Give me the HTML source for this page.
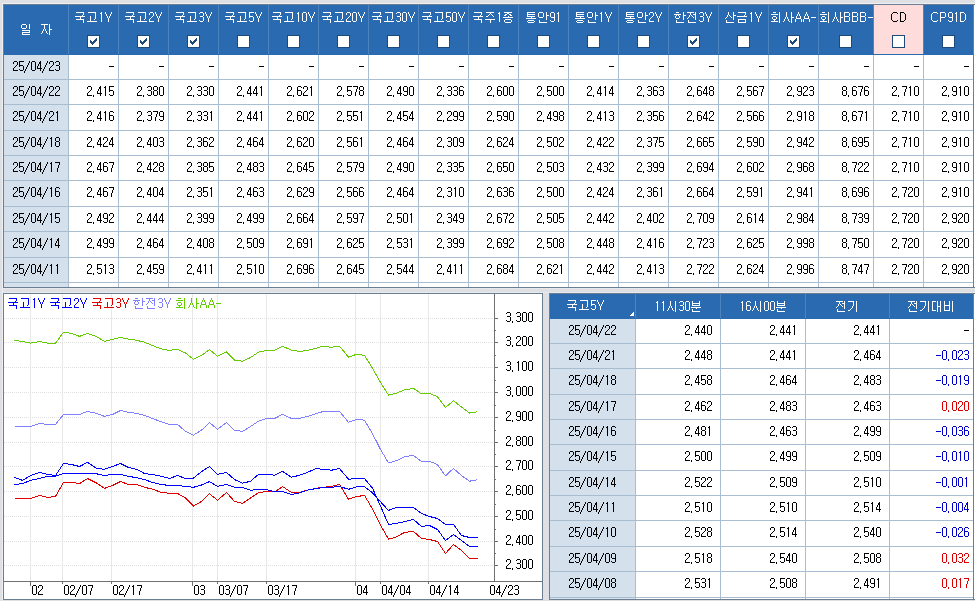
<!DOCTYPE html><html><head><meta charset="utf-8"><style>
html,body{margin:0;padding:0;} body{width:975px;height:601px;overflow:hidden;position:relative;background:#dfe0e4;font-family:'Liberation Sans',sans-serif;}
div{position:absolute;box-sizing:border-box;}
.t{white-space:nowrap;}
</style></head><body>
<svg width="0" height="0" style="position:absolute;left:0;top:0"><defs><path id="g0" d="M1 0h3v1h-3zM0 1h1v1h-1zM4 1h1v1h-1zM0 2h1v1h-1zM4 2h1v1h-1zM0 3h1v1h-1zM4 3h1v1h-1zM0 4h1v1h-1zM4 4h1v1h-1zM0 5h1v1h-1zM4 5h1v1h-1zM0 6h1v1h-1zM4 6h1v1h-1zM0 7h1v1h-1zM4 7h1v1h-1zM0 8h1v1h-1zM4 8h1v1h-1zM1 9h3v1h-3z"/><path id="g1" d="M2 0h1v1h-1zM1 1h2v1h-2zM2 2h1v1h-1zM2 3h1v1h-1zM2 4h1v1h-1zM2 5h1v1h-1zM2 6h1v1h-1zM2 7h1v1h-1zM2 8h1v1h-1zM2 9h1v1h-1z"/><path id="g2" d="M1 0h3v1h-3zM0 1h1v1h-1zM4 1h1v1h-1zM0 2h1v1h-1zM4 2h1v1h-1zM4 3h1v1h-1zM3 4h1v1h-1zM2 5h1v1h-1zM1 6h1v1h-1zM0 7h1v1h-1zM0 8h1v1h-1zM0 9h5v1h-5z"/><path id="g3" d="M1 0h3v1h-3zM0 1h1v1h-1zM4 1h1v1h-1zM4 2h1v1h-1zM4 3h1v1h-1zM1 4h3v1h-3zM4 5h1v1h-1zM4 6h1v1h-1zM4 7h1v1h-1zM0 8h1v1h-1zM4 8h1v1h-1zM1 9h3v1h-3z"/><path id="g4" d="M3 0h1v1h-1zM2 1h2v1h-2zM2 2h2v1h-2zM1 3h1v1h-1zM3 3h1v1h-1zM1 4h1v1h-1zM3 4h1v1h-1zM0 5h1v1h-1zM3 5h1v1h-1zM0 6h1v1h-1zM3 6h1v1h-1zM0 7h5v1h-5zM3 8h1v1h-1zM3 9h1v1h-1z"/><path id="g5" d="M0 0h5v1h-5zM0 1h1v1h-1zM0 2h1v1h-1zM0 3h1v1h-1zM0 4h4v1h-4zM0 5h1v1h-1zM4 5h1v1h-1zM4 6h1v1h-1zM4 7h1v1h-1zM0 8h1v1h-1zM4 8h1v1h-1zM1 9h3v1h-3z"/><path id="g6" d="M1 0h3v1h-3zM0 1h1v1h-1zM4 1h1v1h-1zM0 2h1v1h-1zM0 3h1v1h-1zM0 4h4v1h-4zM0 5h1v1h-1zM4 5h1v1h-1zM0 6h1v1h-1zM4 6h1v1h-1zM0 7h1v1h-1zM4 7h1v1h-1zM0 8h1v1h-1zM4 8h1v1h-1zM1 9h3v1h-3z"/><path id="g7" d="M0 0h5v1h-5zM4 1h1v1h-1zM4 2h1v1h-1zM3 3h1v1h-1zM3 4h1v1h-1zM3 5h1v1h-1zM2 6h1v1h-1zM2 7h1v1h-1zM2 8h1v1h-1zM2 9h1v1h-1z"/><path id="g8" d="M1 0h3v1h-3zM0 1h1v1h-1zM4 1h1v1h-1zM0 2h1v1h-1zM4 2h1v1h-1zM0 3h1v1h-1zM4 3h1v1h-1zM1 4h3v1h-3zM0 5h1v1h-1zM4 5h1v1h-1zM0 6h1v1h-1zM4 6h1v1h-1zM0 7h1v1h-1zM4 7h1v1h-1zM0 8h1v1h-1zM4 8h1v1h-1zM1 9h3v1h-3z"/><path id="g9" d="M1 0h3v1h-3zM0 1h1v1h-1zM4 1h1v1h-1zM0 2h1v1h-1zM4 2h1v1h-1zM0 3h1v1h-1zM4 3h1v1h-1zM0 4h1v1h-1zM4 4h1v1h-1zM1 5h4v1h-4zM4 6h1v1h-1zM4 7h1v1h-1zM0 8h1v1h-1zM4 8h1v1h-1zM1 9h3v1h-3z"/><path id="gcm" d="M0 9h1v2h-1z"/><path id="gsl" d="M4 0h1v2h-1zM3 2h1v2h-1zM2 4h1v2h-1zM1 6h1v2h-1zM0 8h1v2h-1zM-1 10h1v2h-1z"/><path id="gmn" d="M0 5h5v1h-5z"/></defs></svg>
<svg width="0" height="0" style="position:absolute;left:0;top:0"><defs><path id="h0" d="M1 0h8v1h-8zM8 1h1v1h-1zM8 2h1v1h-1zM7 3h1v1h-1zM0 4h10v1h-10zM5 5h1v1h-1zM5 6h1v1h-1zM1 7h8v1h-8zM8 8h1v1h-1zM8 9h1v1h-1zM8 10h1v1h-1z"/><path id="h1" d="M1 0h8v1h-8zM8 1h1v1h-1zM8 2h1v1h-1zM8 3h1v1h-1zM3 4h1v1h-1zM8 4h1v1h-1zM3 5h1v1h-1zM8 5h1v1h-1zM3 6h1v1h-1zM8 6h1v1h-1zM3 7h1v1h-1zM7 7h1v1h-1zM3 8h1v1h-1zM0 9h10v1h-10z"/><path id="h2" d="M1 0h8v1h-8zM5 1h1v1h-1zM4 2h1v1h-1zM6 2h1v1h-1zM3 3h1v1h-1zM7 3h1v1h-1zM1 4h2v1h-2zM8 4h1v1h-1zM0 7h10v1h-10zM5 8h1v1h-1zM5 9h1v1h-1zM5 10h1v1h-1z"/><path id="h3" d="M1 0h8v1h-8zM4 1h2v1h-2zM2 2h2v1h-2zM6 2h2v1h-2zM1 3h2v1h-2zM7 3h2v1h-2zM5 4h1v1h-1zM0 5h10v1h-10zM2 7h6v1h-6zM1 8h1v1h-1zM8 8h1v1h-1zM1 9h1v1h-1zM8 9h1v1h-1zM2 10h6v1h-6z"/><path id="h4" d="M1 0h8v1h-8zM1 1h1v1h-1zM1 2h8v1h-8zM1 3h1v1h-1zM1 4h8v1h-8zM5 5h1v1h-1zM0 6h10v1h-10zM2 8h6v1h-6zM1 9h1v1h-1zM8 9h1v1h-1zM2 10h6v1h-6z"/><path id="h5" d="M1 0h4v1h-4zM8 0h1v1h-1zM0 1h1v1h-1zM5 1h1v1h-1zM8 1h1v1h-1zM0 2h1v1h-1zM5 2h1v1h-1zM8 2h1v1h-1zM0 3h1v1h-1zM5 3h1v1h-1zM8 3h3v1h-3zM0 4h1v1h-1zM5 4h1v1h-1zM8 4h1v1h-1zM1 5h4v1h-4zM8 5h1v1h-1zM8 6h1v1h-1zM8 7h1v1h-1zM1 8h1v1h-1zM1 9h1v1h-1zM1 10h8v1h-8z"/><path id="h6" d="M1 0h3v1h-3zM8 0h1v1h-1zM8 1h1v1h-1zM-1 2h7v1h-7zM8 2h1v1h-1zM1 3h1v1h-1zM3 3h1v1h-1zM8 3h3v1h-3zM0 4h1v1h-1zM4 4h1v1h-1zM8 4h1v1h-1zM0 5h1v1h-1zM4 5h1v1h-1zM8 5h1v1h-1zM1 6h3v1h-3zM8 6h1v1h-1zM8 7h1v1h-1zM1 8h1v1h-1zM1 9h1v1h-1zM1 10h8v1h-8z"/><path id="h7" d="M0 0h7v1h-7zM8 0h1v1h-1zM3 1h1v1h-1zM8 1h1v1h-1zM3 2h1v1h-1zM6 2h3v1h-3zM2 3h1v1h-1zM4 3h1v1h-1zM8 3h1v1h-1zM2 4h1v1h-1zM5 4h1v1h-1zM8 4h1v1h-1zM1 5h1v1h-1zM6 5h1v1h-1zM8 5h1v1h-1zM0 6h1v1h-1zM8 6h1v1h-1zM8 7h1v1h-1zM1 8h1v1h-1zM1 9h1v1h-1zM1 10h8v1h-8z"/><path id="h8" d="M3 0h1v1h-1zM8 0h1v1h-1zM3 1h1v1h-1zM8 1h1v1h-1zM3 2h1v1h-1zM8 2h1v1h-1zM2 3h1v1h-1zM4 3h1v1h-1zM8 3h3v1h-3zM2 4h1v1h-1zM5 4h1v1h-1zM8 4h1v1h-1zM1 5h1v1h-1zM6 5h1v1h-1zM8 5h1v1h-1zM0 6h1v1h-1zM8 6h1v1h-1zM8 7h1v1h-1zM1 8h1v1h-1zM1 9h1v1h-1zM1 10h8v1h-8z"/><path id="h9" d="M1 0h8v1h-8zM8 1h1v1h-1zM8 2h1v1h-1zM7 3h1v1h-1zM0 4h10v1h-10zM1 7h8v1h-8zM1 8h1v1h-1zM8 8h1v1h-1zM1 9h1v1h-1zM8 9h1v1h-1zM1 10h8v1h-8z"/><path id="h10" d="M2 0h3v1h-3zM8 0h1v1h-1zM8 1h1v1h-1zM0 2h7v1h-7zM8 2h1v1h-1zM8 3h1v1h-1zM2 4h3v1h-3zM8 4h1v1h-1zM1 5h1v1h-1zM5 5h1v1h-1zM8 5h1v1h-1zM1 6h1v1h-1zM5 6h1v1h-1zM8 6h1v1h-1zM2 7h3v1h-3zM8 7h1v1h-1zM3 8h1v1h-1zM8 8h1v1h-1zM0 9h7v1h-7zM8 9h1v1h-1zM8 10h1v1h-1z"/><path id="h11" d="M3 0h1v1h-1zM8 0h1v1h-1zM3 1h1v1h-1zM8 1h1v1h-1zM3 2h1v1h-1zM8 2h1v1h-1zM3 3h1v1h-1zM8 3h1v1h-1zM3 4h1v1h-1zM8 4h1v1h-1zM2 5h1v1h-1zM4 5h1v1h-1zM8 5h3v1h-3zM2 6h1v1h-1zM4 6h1v1h-1zM8 6h1v1h-1zM1 7h1v1h-1zM5 7h1v1h-1zM8 7h1v1h-1zM1 8h1v1h-1zM5 8h1v1h-1zM8 8h1v1h-1zM0 9h1v1h-1zM6 9h1v1h-1zM8 9h1v1h-1zM8 10h1v1h-1z"/><path id="h12" d="M1 0h4v1h-4zM8 0h1v1h-1zM0 1h1v1h-1zM5 1h1v1h-1zM8 1h1v1h-1zM0 2h1v1h-1zM5 2h1v1h-1zM8 2h1v1h-1zM0 3h1v1h-1zM5 3h1v1h-1zM8 3h1v1h-1zM1 4h4v1h-4zM8 4h1v1h-1zM1 6h8v1h-8zM8 7h1v1h-1zM1 8h8v1h-8zM1 9h1v1h-1zM1 10h8v1h-8z"/><path id="h13" d="M0 0h7v1h-7zM8 0h1v1h-1zM3 1h1v1h-1zM8 1h1v1h-1zM3 2h1v1h-1zM8 2h1v1h-1zM3 3h1v1h-1zM8 3h1v1h-1zM3 4h1v1h-1zM8 4h1v1h-1zM2 5h1v1h-1zM4 5h1v1h-1zM8 5h3v1h-3zM2 6h1v1h-1zM4 6h1v1h-1zM8 6h1v1h-1zM1 7h1v1h-1zM5 7h1v1h-1zM8 7h1v1h-1zM1 8h1v1h-1zM5 8h1v1h-1zM8 8h1v1h-1zM0 9h1v1h-1zM6 9h1v1h-1zM8 9h1v1h-1zM8 10h1v1h-1z"/><path id="h14" d="M3 0h1v1h-1zM8 0h1v1h-1zM3 1h1v1h-1zM8 1h1v1h-1zM3 2h1v1h-1zM8 2h1v1h-1zM3 3h1v1h-1zM8 3h1v1h-1zM3 4h1v1h-1zM8 4h1v1h-1zM2 5h1v1h-1zM4 5h1v1h-1zM8 5h1v1h-1zM2 6h1v1h-1zM4 6h1v1h-1zM8 6h1v1h-1zM1 7h1v1h-1zM5 7h1v1h-1zM8 7h1v1h-1zM1 8h1v1h-1zM5 8h1v1h-1zM8 8h1v1h-1zM0 9h1v1h-1zM6 9h1v1h-1zM8 9h1v1h-1zM8 10h1v1h-1z"/><path id="h15" d="M1 0h1v1h-1zM8 0h1v1h-1zM1 1h1v1h-1zM8 1h1v1h-1zM1 2h8v1h-8zM1 3h1v1h-1zM8 3h1v1h-1zM1 4h8v1h-8zM0 6h10v1h-10zM5 7h1v1h-1zM1 8h1v1h-1zM1 9h1v1h-1zM1 10h8v1h-8z"/><path id="h16" d="M0 0h6v1h-6zM8 0h1v1h-1zM5 1h1v1h-1zM8 1h1v1h-1zM5 2h1v1h-1zM8 2h1v1h-1zM5 3h1v1h-1zM8 3h1v1h-1zM5 4h1v1h-1zM8 4h1v1h-1zM4 5h1v1h-1zM8 5h1v1h-1zM4 6h1v1h-1zM8 6h1v1h-1zM3 7h1v1h-1zM8 7h1v1h-1zM2 8h1v1h-1zM8 8h1v1h-1zM0 9h2v1h-2zM8 9h1v1h-1zM8 10h1v1h-1z"/><path id="h17" d="M0 0h4v1h-4zM5 0h1v1h-1zM8 0h1v1h-1zM0 1h1v1h-1zM5 1h1v1h-1zM8 1h1v1h-1zM0 2h1v1h-1zM5 2h1v1h-1zM8 2h1v1h-1zM0 3h1v1h-1zM5 3h1v1h-1zM8 3h1v1h-1zM0 4h1v1h-1zM5 4h1v1h-1zM8 4h1v1h-1zM0 5h1v1h-1zM5 5h4v1h-4zM0 6h1v1h-1zM5 6h1v1h-1zM8 6h1v1h-1zM0 7h1v1h-1zM5 7h1v1h-1zM8 7h1v1h-1zM0 8h1v1h-1zM5 8h1v1h-1zM8 8h1v1h-1zM0 9h4v1h-4zM5 9h1v1h-1zM8 9h1v1h-1zM5 10h1v1h-1zM8 10h1v1h-1z"/><path id="h18" d="M0 0h1v1h-1zM5 0h1v1h-1zM8 0h1v1h-1zM0 1h1v1h-1zM5 1h1v1h-1zM8 1h1v1h-1zM0 2h1v1h-1zM5 2h1v1h-1zM8 2h1v1h-1zM0 3h1v1h-1zM5 3h1v1h-1zM8 3h1v1h-1zM0 4h6v1h-6zM8 4h1v1h-1zM0 5h1v1h-1zM5 5h1v1h-1zM8 5h1v1h-1zM0 6h1v1h-1zM5 6h1v1h-1zM8 6h1v1h-1zM0 7h1v1h-1zM5 7h1v1h-1zM8 7h1v1h-1zM0 8h1v1h-1zM5 8h1v1h-1zM8 8h1v1h-1zM0 9h6v1h-6zM8 9h1v1h-1zM8 10h1v1h-1z"/><path id="h19" d="M0 0h1v1h-1zM6 0h1v1h-1zM0 1h1v1h-1zM6 1h1v1h-1zM1 2h1v1h-1zM5 2h1v1h-1zM1 3h1v1h-1zM5 3h1v1h-1zM2 4h1v1h-1zM4 4h1v1h-1zM2 5h1v1h-1zM4 5h1v1h-1zM3 6h1v1h-1zM3 7h1v1h-1zM3 8h1v1h-1zM3 9h1v1h-1z"/><path id="h20" d="M3 0h1v1h-1zM3 1h1v1h-1zM2 2h1v1h-1zM4 2h1v1h-1zM2 3h1v1h-1zM4 3h1v1h-1zM1 4h1v1h-1zM5 4h1v1h-1zM1 5h1v1h-1zM5 5h1v1h-1zM1 6h5v1h-5zM0 7h1v1h-1zM6 7h1v1h-1zM0 8h1v1h-1zM6 8h1v1h-1zM0 9h1v1h-1zM6 9h1v1h-1z"/><path id="h21" d="M0 0h5v1h-5zM0 1h1v1h-1zM5 1h1v1h-1zM0 2h1v1h-1zM5 2h1v1h-1zM0 3h1v1h-1zM5 3h1v1h-1zM0 4h5v1h-5zM0 5h1v1h-1zM5 5h1v1h-1zM0 6h1v1h-1zM5 6h1v1h-1zM0 7h1v1h-1zM5 7h1v1h-1zM0 8h1v1h-1zM5 8h1v1h-1zM0 9h5v1h-5z"/><path id="h22" d="M2 0h4v1h-4zM1 1h1v1h-1zM6 1h1v1h-1zM0 2h1v1h-1zM0 3h1v1h-1zM0 4h1v1h-1zM0 5h1v1h-1zM0 6h1v1h-1zM0 7h1v1h-1zM1 8h1v1h-1zM6 8h1v1h-1zM2 9h4v1h-4z"/><path id="h23" d="M0 0h4v1h-4zM0 1h1v1h-1zM4 1h1v1h-1zM0 2h1v1h-1zM5 2h1v1h-1zM0 3h1v1h-1zM5 3h1v1h-1zM0 4h1v1h-1zM5 4h1v1h-1zM0 5h1v1h-1zM5 5h1v1h-1zM0 6h1v1h-1zM5 6h1v1h-1zM0 7h1v1h-1zM5 7h1v1h-1zM0 8h1v1h-1zM4 8h1v1h-1zM0 9h4v1h-4z"/><path id="h24" d="M0 0h5v1h-5zM0 1h1v1h-1zM5 1h1v1h-1zM0 2h1v1h-1zM5 2h1v1h-1zM0 3h1v1h-1zM5 3h1v1h-1zM0 4h1v1h-1zM5 4h1v1h-1zM0 5h5v1h-5zM0 6h1v1h-1zM0 7h1v1h-1zM0 8h1v1h-1zM0 9h1v1h-1z"/></defs></svg>
<div style="left:2px;top:3px;width:973px;height:1px;background:#eeeff2;"></div>
<div style="left:2px;top:3px;width:1px;height:598px;background:#eeeff2;"></div>
<div style="left:2px;top:288px;width:973px;height:1px;background:#e8e9ec;"></div>
<div style="left:2px;top:292px;width:973px;height:1px;background:#e8e9ec;"></div>
<div style="left:3px;top:4px;width:971px;height:284px;background:#6b7e92;"></div>
<div style="left:4px;top:5px;width:969px;height:282px;background:#ffffff;"></div>
<div style="left:974px;top:5px;width:1px;height:282px;background:#ffffff;"></div>
<div style="left:974px;top:4px;width:1px;height:1px;background:#6b7e92;"></div>
<div style="left:974px;top:287px;width:1px;height:1px;background:#6b7e92;"></div>
<div style="left:4px;top:5px;width:969px;height:50px;background:#2a6ab0;"></div>
<div style="left:874px;top:5px;width:49px;height:49px;background:#ffdcdc;"></div>
<div style="left:68px;top:5px;width:1px;height:49px;background:#4d84c0;"></div>
<div style="left:118px;top:5px;width:1px;height:49px;background:#4d84c0;"></div>
<div style="left:168px;top:5px;width:1px;height:49px;background:#4d84c0;"></div>
<div style="left:218px;top:5px;width:1px;height:49px;background:#4d84c0;"></div>
<div style="left:268px;top:5px;width:1px;height:49px;background:#4d84c0;"></div>
<div style="left:318px;top:5px;width:1px;height:49px;background:#4d84c0;"></div>
<div style="left:368px;top:5px;width:1px;height:49px;background:#4d84c0;"></div>
<div style="left:418px;top:5px;width:1px;height:49px;background:#4d84c0;"></div>
<div style="left:468px;top:5px;width:1px;height:49px;background:#4d84c0;"></div>
<div style="left:518px;top:5px;width:1px;height:49px;background:#4d84c0;"></div>
<div style="left:568px;top:5px;width:1px;height:49px;background:#4d84c0;"></div>
<div style="left:618px;top:5px;width:1px;height:49px;background:#4d84c0;"></div>
<div style="left:668px;top:5px;width:1px;height:49px;background:#4d84c0;"></div>
<div style="left:718px;top:5px;width:1px;height:49px;background:#4d84c0;"></div>
<div style="left:768px;top:5px;width:1px;height:49px;background:#4d84c0;"></div>
<div style="left:818px;top:5px;width:1px;height:49px;background:#4d84c0;"></div>
<div style="left:873px;top:5px;width:1px;height:49px;background:#4d84c0;"></div>
<div style="left:923px;top:5px;width:1px;height:49px;background:#4d84c0;"></div>
<div style="left:4px;top:55px;width:64px;height:232px;background:#d4e0eb;"></div>
<div style="left:4px;top:79px;width:969px;height:1px;background:#a9bdd0;"></div>
<div style="left:4px;top:104px;width:969px;height:1px;background:#a9bdd0;"></div>
<div style="left:4px;top:130px;width:969px;height:1px;background:#a9bdd0;"></div>
<div style="left:4px;top:155px;width:969px;height:1px;background:#a9bdd0;"></div>
<div style="left:4px;top:180px;width:969px;height:1px;background:#a9bdd0;"></div>
<div style="left:4px;top:206px;width:969px;height:1px;background:#a9bdd0;"></div>
<div style="left:4px;top:231px;width:969px;height:1px;background:#a9bdd0;"></div>
<div style="left:4px;top:257px;width:969px;height:1px;background:#a9bdd0;"></div>
<div style="left:4px;top:282px;width:969px;height:1px;background:#a9bdd0;"></div>
<div style="left:68px;top:55px;width:1px;height:232px;background:#a9bdd0;"></div>
<div style="left:118px;top:55px;width:1px;height:232px;background:#a9bdd0;"></div>
<div style="left:168px;top:55px;width:1px;height:232px;background:#a9bdd0;"></div>
<div style="left:218px;top:55px;width:1px;height:232px;background:#a9bdd0;"></div>
<div style="left:268px;top:55px;width:1px;height:232px;background:#a9bdd0;"></div>
<div style="left:318px;top:55px;width:1px;height:232px;background:#a9bdd0;"></div>
<div style="left:368px;top:55px;width:1px;height:232px;background:#a9bdd0;"></div>
<div style="left:418px;top:55px;width:1px;height:232px;background:#a9bdd0;"></div>
<div style="left:468px;top:55px;width:1px;height:232px;background:#a9bdd0;"></div>
<div style="left:518px;top:55px;width:1px;height:232px;background:#a9bdd0;"></div>
<div style="left:568px;top:55px;width:1px;height:232px;background:#a9bdd0;"></div>
<div style="left:618px;top:55px;width:1px;height:232px;background:#a9bdd0;"></div>
<div style="left:668px;top:55px;width:1px;height:232px;background:#a9bdd0;"></div>
<div style="left:718px;top:55px;width:1px;height:232px;background:#a9bdd0;"></div>
<div style="left:768px;top:55px;width:1px;height:232px;background:#a9bdd0;"></div>
<div style="left:818px;top:55px;width:1px;height:232px;background:#a9bdd0;"></div>
<div style="left:873px;top:55px;width:1px;height:232px;background:#a9bdd0;"></div>
<div style="left:923px;top:55px;width:1px;height:232px;background:#a9bdd0;"></div>
<div style="left:87px;top:35px;width:13px;height:13px"><svg width="13" height="13" viewBox="0 0 13 13" style="position:absolute;left:0;top:0"><rect x="0.5" y="0.5" width="12" height="12" fill="#fff" stroke="#1d4a7a"/><path shape-rendering="crispEdges" fill="#1d4a7a" d="M3 5h1v3h-1z M4 6h1v3h-1z M5 7h1v3h-1z M6 6h1v3h-1z M7 5h1v3h-1z M8 4h1v3h-1z M9 3h1v3h-1z"/></svg></div>
<div style="left:137px;top:35px;width:13px;height:13px"><svg width="13" height="13" viewBox="0 0 13 13" style="position:absolute;left:0;top:0"><rect x="0.5" y="0.5" width="12" height="12" fill="#fff" stroke="#1d4a7a"/><path shape-rendering="crispEdges" fill="#1d4a7a" d="M3 5h1v3h-1z M4 6h1v3h-1z M5 7h1v3h-1z M6 6h1v3h-1z M7 5h1v3h-1z M8 4h1v3h-1z M9 3h1v3h-1z"/></svg></div>
<div style="left:187px;top:35px;width:13px;height:13px"><svg width="13" height="13" viewBox="0 0 13 13" style="position:absolute;left:0;top:0"><rect x="0.5" y="0.5" width="12" height="12" fill="#fff" stroke="#1d4a7a"/><path shape-rendering="crispEdges" fill="#1d4a7a" d="M3 5h1v3h-1z M4 6h1v3h-1z M5 7h1v3h-1z M6 6h1v3h-1z M7 5h1v3h-1z M8 4h1v3h-1z M9 3h1v3h-1z"/></svg></div>
<div style="left:237px;top:35px;width:13px;height:13px"><svg width="13" height="13" viewBox="0 0 13 13" style="position:absolute;left:0;top:0"><rect x="0.5" y="0.5" width="12" height="12" fill="#fff" stroke="#1d4a7a"/></svg></div>
<div style="left:287px;top:35px;width:13px;height:13px"><svg width="13" height="13" viewBox="0 0 13 13" style="position:absolute;left:0;top:0"><rect x="0.5" y="0.5" width="12" height="12" fill="#fff" stroke="#1d4a7a"/></svg></div>
<div style="left:337px;top:35px;width:13px;height:13px"><svg width="13" height="13" viewBox="0 0 13 13" style="position:absolute;left:0;top:0"><rect x="0.5" y="0.5" width="12" height="12" fill="#fff" stroke="#1d4a7a"/></svg></div>
<div style="left:387px;top:35px;width:13px;height:13px"><svg width="13" height="13" viewBox="0 0 13 13" style="position:absolute;left:0;top:0"><rect x="0.5" y="0.5" width="12" height="12" fill="#fff" stroke="#1d4a7a"/></svg></div>
<div style="left:437px;top:35px;width:13px;height:13px"><svg width="13" height="13" viewBox="0 0 13 13" style="position:absolute;left:0;top:0"><rect x="0.5" y="0.5" width="12" height="12" fill="#fff" stroke="#1d4a7a"/></svg></div>
<div style="left:487px;top:35px;width:13px;height:13px"><svg width="13" height="13" viewBox="0 0 13 13" style="position:absolute;left:0;top:0"><rect x="0.5" y="0.5" width="12" height="12" fill="#fff" stroke="#1d4a7a"/></svg></div>
<div style="left:537px;top:35px;width:13px;height:13px"><svg width="13" height="13" viewBox="0 0 13 13" style="position:absolute;left:0;top:0"><rect x="0.5" y="0.5" width="12" height="12" fill="#fff" stroke="#1d4a7a"/></svg></div>
<div style="left:587px;top:35px;width:13px;height:13px"><svg width="13" height="13" viewBox="0 0 13 13" style="position:absolute;left:0;top:0"><rect x="0.5" y="0.5" width="12" height="12" fill="#fff" stroke="#1d4a7a"/></svg></div>
<div style="left:637px;top:35px;width:13px;height:13px"><svg width="13" height="13" viewBox="0 0 13 13" style="position:absolute;left:0;top:0"><rect x="0.5" y="0.5" width="12" height="12" fill="#fff" stroke="#1d4a7a"/></svg></div>
<div style="left:687px;top:35px;width:13px;height:13px"><svg width="13" height="13" viewBox="0 0 13 13" style="position:absolute;left:0;top:0"><rect x="0.5" y="0.5" width="12" height="12" fill="#fff" stroke="#1d4a7a"/><path shape-rendering="crispEdges" fill="#1d4a7a" d="M3 5h1v3h-1z M4 6h1v3h-1z M5 7h1v3h-1z M6 6h1v3h-1z M7 5h1v3h-1z M8 4h1v3h-1z M9 3h1v3h-1z"/></svg></div>
<div style="left:737px;top:35px;width:13px;height:13px"><svg width="13" height="13" viewBox="0 0 13 13" style="position:absolute;left:0;top:0"><rect x="0.5" y="0.5" width="12" height="12" fill="#fff" stroke="#1d4a7a"/></svg></div>
<div style="left:787px;top:35px;width:13px;height:13px"><svg width="13" height="13" viewBox="0 0 13 13" style="position:absolute;left:0;top:0"><rect x="0.5" y="0.5" width="12" height="12" fill="#fff" stroke="#1d4a7a"/><path shape-rendering="crispEdges" fill="#1d4a7a" d="M3 5h1v3h-1z M4 6h1v3h-1z M5 7h1v3h-1z M6 6h1v3h-1z M7 5h1v3h-1z M8 4h1v3h-1z M9 3h1v3h-1z"/></svg></div>
<div style="left:839px;top:35px;width:13px;height:13px"><svg width="13" height="13" viewBox="0 0 13 13" style="position:absolute;left:0;top:0"><rect x="0.5" y="0.5" width="12" height="12" fill="#fff" stroke="#1d4a7a"/></svg></div>
<div style="left:892px;top:35px;width:13px;height:13px"><svg width="13" height="13" viewBox="0 0 13 13" style="position:absolute;left:0;top:0"><rect x="0.5" y="0.5" width="12" height="12" fill="#fff" stroke="#1d4a7a"/></svg></div>
<div style="left:942px;top:35px;width:13px;height:13px"><svg width="13" height="13" viewBox="0 0 13 13" style="position:absolute;left:0;top:0"><rect x="0.5" y="0.5" width="12" height="12" fill="#fff" stroke="#1d4a7a"/></svg></div>
<div style="left:3px;top:293px;width:540px;height:307px;background:#6b7e92;"></div>
<div style="left:4px;top:294px;width:538px;height:305px;background:#fff;"></div>
<svg width="975" height="601" style="position:absolute;left:0;top:0" shape-rendering="crispEdges">
<rect x="30" y="294" width="1" height="287" fill="#e8e8e8"/>
<rect x="62" y="294" width="1" height="287" fill="#e8e8e8"/>
<rect x="111" y="294" width="1" height="287" fill="#e8e8e8"/>
<rect x="192" y="294" width="1" height="287" fill="#e8e8e8"/>
<rect x="217" y="294" width="1" height="287" fill="#e8e8e8"/>
<rect x="266" y="294" width="1" height="287" fill="#e8e8e8"/>
<rect x="355" y="294" width="1" height="287" fill="#e8e8e8"/>
<rect x="380" y="294" width="1" height="287" fill="#e8e8e8"/>
<rect x="428" y="294" width="1" height="287" fill="#e8e8e8"/>
<line x1="4" y1="318.5" x2="494" y2="318.5" stroke="#e0e0e0" stroke-dasharray="1 1"/>
<line x1="4" y1="342.5" x2="494" y2="342.5" stroke="#e0e0e0" stroke-dasharray="1 1"/>
<line x1="4" y1="367.5" x2="494" y2="367.5" stroke="#e0e0e0" stroke-dasharray="1 1"/>
<line x1="4" y1="392.5" x2="494" y2="392.5" stroke="#e0e0e0" stroke-dasharray="1 1"/>
<line x1="4" y1="417.5" x2="494" y2="417.5" stroke="#e0e0e0" stroke-dasharray="1 1"/>
<line x1="4" y1="442.5" x2="494" y2="442.5" stroke="#e0e0e0" stroke-dasharray="1 1"/>
<line x1="4" y1="466.5" x2="494" y2="466.5" stroke="#e0e0e0" stroke-dasharray="1 1"/>
<line x1="4" y1="491.5" x2="494" y2="491.5" stroke="#e0e0e0" stroke-dasharray="1 1"/>
<line x1="4" y1="516.5" x2="494" y2="516.5" stroke="#e0e0e0" stroke-dasharray="1 1"/>
<line x1="4" y1="541.5" x2="494" y2="541.5" stroke="#e0e0e0" stroke-dasharray="1 1"/>
<line x1="4" y1="565.5" x2="494" y2="565.5" stroke="#e0e0e0" stroke-dasharray="1 1"/>
<rect x="494" y="294" width="1" height="288" fill="#707070"/>
<rect x="4" y="581" width="538" height="1" fill="#707070"/>
<rect x="494" y="318" width="4" height="1" fill="#707070"/>
<rect x="494" y="330" width="2" height="1" fill="#707070"/>
<rect x="494" y="342" width="4" height="1" fill="#707070"/>
<rect x="494" y="355" width="2" height="1" fill="#707070"/>
<rect x="494" y="367" width="4" height="1" fill="#707070"/>
<rect x="494" y="380" width="2" height="1" fill="#707070"/>
<rect x="494" y="392" width="4" height="1" fill="#707070"/>
<rect x="494" y="405" width="2" height="1" fill="#707070"/>
<rect x="494" y="417" width="4" height="1" fill="#707070"/>
<rect x="494" y="430" width="2" height="1" fill="#707070"/>
<rect x="494" y="442" width="4" height="1" fill="#707070"/>
<rect x="494" y="454" width="2" height="1" fill="#707070"/>
<rect x="494" y="466" width="4" height="1" fill="#707070"/>
<rect x="494" y="479" width="2" height="1" fill="#707070"/>
<rect x="494" y="491" width="4" height="1" fill="#707070"/>
<rect x="494" y="504" width="2" height="1" fill="#707070"/>
<rect x="494" y="516" width="4" height="1" fill="#707070"/>
<rect x="494" y="529" width="2" height="1" fill="#707070"/>
<rect x="494" y="541" width="4" height="1" fill="#707070"/>
<rect x="494" y="553" width="2" height="1" fill="#707070"/>
<rect x="494" y="565" width="4" height="1" fill="#707070"/>
<rect x="30" y="582" width="1" height="4" fill="#707070"/>
<rect x="62" y="582" width="1" height="2" fill="#707070"/>
<rect x="111" y="582" width="1" height="2" fill="#707070"/>
<rect x="192" y="582" width="1" height="4" fill="#707070"/>
<rect x="217" y="582" width="1" height="2" fill="#707070"/>
<rect x="266" y="582" width="1" height="2" fill="#707070"/>
<rect x="355" y="582" width="1" height="4" fill="#707070"/>
<rect x="380" y="582" width="1" height="2" fill="#707070"/>
<rect x="428" y="582" width="1" height="2" fill="#707070"/>
</svg>
<svg width="975" height="601" style="position:absolute;left:0;top:0" shape-rendering="crispEdges">
<polyline points="14.5,340.3 22.5,341.5 30.5,343.1 39.5,341.5 47.5,343.1 55.5,343.1 63.5,332.3 71.5,333.3 79.5,336.4 87.5,333.5 96.5,336.6 104.5,341.5 112.5,339.4 120.5,337.5 128.5,339.1 136.5,340.3 144.5,342.2 152.5,345.6 161.5,348.9 169.5,350.4 177.5,349.3 185.5,353.0 193.5,359.4 201.5,355.4 209.5,349.5 217.5,356.3 226.5,351.8 234.5,360.2 242.5,361.2 250.5,357.5 258.5,352.2 266.5,350.4 274.5,350.2 282.5,346.2 291.5,350.2 299.5,351.4 307.5,350.4 315.5,348.3 323.5,346.2 331.5,347.3 339.5,346.1 348.5,357.2 356.5,354.3 364.5,355.4 372.5,368.2 380.5,382.4 388.5,395.1 396.5,393.2 404.5,389.9 413.5,388.4 421.5,393.8 429.5,393.3 437.5,396.8 445.5,407.4 453.5,400.7 461.5,407.1 469.5,413.1 477.5,411.8" fill="none" stroke="#66cc00" stroke-width="1"/>
<polyline points="14.5,426.5 22.5,426.5 30.5,426.5 39.5,423.4 47.5,424.4 55.5,424.4 63.5,414.5 71.5,414.5 79.5,414.5 87.5,411.4 96.5,413.3 104.5,416.4 112.5,414.5 120.5,410.5 128.5,412.3 136.5,413.3 144.5,415.4 152.5,418.5 161.5,421.9 169.5,424.4 177.5,424.4 185.5,431.4 193.5,435.1 201.5,430.2 209.5,422.5 217.5,429.3 226.5,422.5 234.5,430.2 242.5,431.4 250.5,426.5 258.5,421.2 266.5,418.5 274.5,418.5 282.5,414.4 291.5,418.5 299.5,418.5 307.5,416.4 315.5,413.9 323.5,411.4 331.5,411.4 339.5,411.4 348.5,422.3 356.5,419.3 364.5,420.2 372.5,433.7 380.5,449.4 388.5,462.9 396.5,460.6 404.5,456.6 413.5,455.4 421.5,461.5 429.5,461.2 437.5,464.7 445.5,475.8 453.5,468.4 461.5,475.5 469.5,481.2 477.5,479.7" fill="none" stroke="#8080ff" stroke-width="1"/>
<polyline points="14.5,498.4 22.5,498.4 30.5,498.4 39.5,495.4 47.5,497.5 55.5,496.3 63.5,482.4 71.5,482.4 79.5,483.6 87.5,478.5 96.5,483.0 104.5,488.4 112.5,485.5 120.5,481.5 128.5,484.5 136.5,484.5 144.5,487.3 152.5,489.2 161.5,492.4 169.5,493.3 177.5,493.4 185.5,498.0 193.5,506.0 201.5,501.4 209.5,493.7 217.5,500.3 226.5,492.5 234.5,501.4 242.5,503.3 250.5,498.0 258.5,492.6 266.5,491.5 274.5,491.9 282.5,486.6 291.5,492.4 299.5,492.4 307.5,490.1 315.5,488.4 323.5,487.3 331.5,486.4 339.5,484.4 348.5,499.3 356.5,496.6 364.5,495.4 372.5,509.0 380.5,525.0 388.5,539.2 396.5,536.9 404.5,532.4 413.5,531.4 421.5,538.5 429.5,539.5 437.5,541.5 445.5,553.5 453.5,544.5 461.5,550.5 469.5,558.5 477.5,558.5" fill="none" stroke="#e00000" stroke-width="1"/>
<polyline points="14.5,477.3 22.5,480.4 30.5,475.5 39.5,472.4 47.5,474.4 55.5,475.5 63.5,463.5 71.5,464.5 79.5,466.5 87.5,462.4 96.5,468.4 104.5,469.3 112.5,466.5 120.5,463.5 128.5,467.5 136.5,469.3 144.5,473.5 152.5,474.6 161.5,476.4 169.5,478.5 177.5,475.5 185.5,478.5 193.5,478.1 201.5,471.6 209.5,466.5 217.5,474.4 226.5,472.5 234.5,479.5 242.5,483.2 250.5,481.3 258.5,474.4 266.5,474.4 274.5,475.1 282.5,471.4 291.5,477.2 299.5,475.3 307.5,472.4 315.5,468.7 323.5,469.3 331.5,470.2 339.5,468.6 348.5,479.2 356.5,478.5 364.5,478.5 372.5,488.2 380.5,506.0 388.5,524.5 396.5,523.4 404.5,521.6 413.5,519.4 421.5,526.5 429.5,525.5 437.5,529.5 445.5,540.5 453.5,534.5 461.5,540.5 469.5,546.5 477.5,546.5" fill="none" stroke="#0000ff" stroke-width="1"/>
<polyline points="14.5,484.5 22.5,483.6 30.5,480.4 39.5,478.5 47.5,476.4 55.5,476.1 63.5,473.5 71.5,473.5 79.5,473.5 87.5,473.5 96.5,473.8 104.5,475.5 112.5,474.4 120.5,474.4 128.5,476.4 136.5,477.6 144.5,479.5 152.5,482.5 161.5,484.5 169.5,485.5 177.5,485.5 185.5,486.4 193.5,487.3 201.5,485.0 209.5,481.6 217.5,486.4 226.5,484.5 234.5,487.3 242.5,487.5 250.5,490.3 258.5,489.5 266.5,489.6 274.5,491.5 282.5,491.5 291.5,494.5 299.5,493.0 307.5,490.1 315.5,488.7 323.5,487.5 331.5,487.3 339.5,486.4 348.5,489.3 356.5,486.9 364.5,486.6 372.5,492.9 380.5,501.7 388.5,510.4 396.5,507.4 404.5,507.4 413.5,507.4 421.5,513.5 429.5,516.5 437.5,518.5 445.5,524.5 453.5,524.5 461.5,535.5 469.5,537.5 477.5,537.5" fill="none" stroke="#0000ff" stroke-width="1"/>
</svg>
<div style="left:549px;top:293px;width:425px;height:307px;background:#6b7e92;"></div>
<div style="left:550px;top:294px;width:423px;height:305px;background:#fff;"></div>
<div style="left:974px;top:294px;width:1px;height:305px;background:#fff;"></div>
<div style="left:974px;top:293px;width:1px;height:1px;background:#6b7e92;"></div>
<div style="left:974px;top:599px;width:1px;height:1px;background:#6b7e92;"></div>
<div style="left:550px;top:294px;width:423px;height:25px;background:#2a6ab0;"></div>
<div style="left:635px;top:294px;width:1px;height:24px;background:#4d84c0;"></div>
<div style="left:720px;top:294px;width:1px;height:24px;background:#4d84c0;"></div>
<div style="left:805px;top:294px;width:1px;height:24px;background:#4d84c0;"></div>
<div style="left:889px;top:294px;width:1px;height:24px;background:#4d84c0;"></div>
<div style="left:550px;top:319px;width:85px;height:280px;background:#d4e0eb;"></div>
<div style="left:550px;top:343px;width:423px;height:1px;background:#a9bdd0;"></div>
<div style="left:550px;top:368px;width:423px;height:1px;background:#a9bdd0;"></div>
<div style="left:550px;top:394px;width:423px;height:1px;background:#a9bdd0;"></div>
<div style="left:550px;top:419px;width:423px;height:1px;background:#a9bdd0;"></div>
<div style="left:550px;top:444px;width:423px;height:1px;background:#a9bdd0;"></div>
<div style="left:550px;top:470px;width:423px;height:1px;background:#a9bdd0;"></div>
<div style="left:550px;top:495px;width:423px;height:1px;background:#a9bdd0;"></div>
<div style="left:550px;top:520px;width:423px;height:1px;background:#a9bdd0;"></div>
<div style="left:550px;top:546px;width:423px;height:1px;background:#a9bdd0;"></div>
<div style="left:550px;top:571px;width:423px;height:1px;background:#a9bdd0;"></div>
<div style="left:550px;top:597px;width:423px;height:1px;background:#a9bdd0;"></div>
<div style="left:635px;top:319px;width:1px;height:280px;background:#a9bdd0;"></div>
<div style="left:720px;top:319px;width:1px;height:280px;background:#a9bdd0;"></div>
<div style="left:805px;top:319px;width:1px;height:280px;background:#a9bdd0;"></div>
<div style="left:889px;top:319px;width:1px;height:280px;background:#a9bdd0;"></div>
<div style="left:633px;top:312px;width:1px;height:4px;background:#fff;"></div>
<div style="left:632px;top:313px;width:1px;height:3px;background:#fff;"></div>
<div style="left:631px;top:314px;width:1px;height:2px;background:#fff;"></div>
<div style="left:630px;top:315px;width:1px;height:1px;background:#fff;"></div>
<svg width="975" height="601" style="position:absolute;left:0;top:0" shape-rendering="crispEdges"><g fill="#fff"><use href="#h12" x="21" y="24"/></g><g fill="#fff"><use href="#h13" x="41" y="24"/></g><g fill="#fff"><use href="#h0" x="75" y="12"/><use href="#h1" x="87" y="12"/><use href="#g1" x="99" y="12"/><use href="#h19" x="105" y="12"/></g><g fill="#fff"><use href="#h0" x="125" y="12"/><use href="#h1" x="137" y="12"/><use href="#g2" x="149" y="12"/><use href="#h19" x="155" y="12"/></g><g fill="#fff"><use href="#h0" x="175" y="12"/><use href="#h1" x="187" y="12"/><use href="#g3" x="199" y="12"/><use href="#h19" x="205" y="12"/></g><g fill="#fff"><use href="#h0" x="225" y="12"/><use href="#h1" x="237" y="12"/><use href="#g5" x="249" y="12"/><use href="#h19" x="255" y="12"/></g><g fill="#fff"><use href="#h0" x="272" y="12"/><use href="#h1" x="284" y="12"/><use href="#g1" x="296" y="12"/><use href="#g0" x="302" y="12"/><use href="#h19" x="308" y="12"/></g><g fill="#fff"><use href="#h0" x="322" y="12"/><use href="#h1" x="334" y="12"/><use href="#g2" x="346" y="12"/><use href="#g0" x="352" y="12"/><use href="#h19" x="358" y="12"/></g><g fill="#fff"><use href="#h0" x="372" y="12"/><use href="#h1" x="384" y="12"/><use href="#g3" x="396" y="12"/><use href="#g0" x="402" y="12"/><use href="#h19" x="408" y="12"/></g><g fill="#fff"><use href="#h0" x="422" y="12"/><use href="#h1" x="434" y="12"/><use href="#g5" x="446" y="12"/><use href="#g0" x="452" y="12"/><use href="#h19" x="458" y="12"/></g><g fill="#fff"><use href="#h0" x="473" y="12"/><use href="#h2" x="485" y="12"/><use href="#g1" x="497" y="12"/><use href="#h3" x="503" y="12"/></g><g fill="#fff"><use href="#h4" x="526" y="12"/><use href="#h5" x="538" y="12"/><use href="#g9" x="550" y="12"/><use href="#g1" x="556" y="12"/></g><g fill="#fff"><use href="#h4" x="575" y="12"/><use href="#h5" x="587" y="12"/><use href="#g1" x="599" y="12"/><use href="#h19" x="605" y="12"/></g><g fill="#fff"><use href="#h4" x="625" y="12"/><use href="#h5" x="637" y="12"/><use href="#g2" x="649" y="12"/><use href="#h19" x="655" y="12"/></g><g fill="#fff"><use href="#h6" x="675" y="12"/><use href="#h7" x="687" y="12"/><use href="#g3" x="699" y="12"/><use href="#h19" x="705" y="12"/></g><g fill="#fff"><use href="#h8" x="725" y="12"/><use href="#h9" x="737" y="12"/><use href="#g1" x="749" y="12"/><use href="#h19" x="755" y="12"/></g><g fill="#fff"><use href="#h10" x="771" y="12"/><use href="#h11" x="783" y="12"/><use href="#h20" x="795" y="12"/><use href="#h20" x="803" y="12"/><use href="#gmn" x="811" y="12"/></g><g fill="#fff"><use href="#h10" x="820" y="12"/><use href="#h11" x="832" y="12"/><use href="#h21" x="844" y="12"/><use href="#h21" x="852" y="12"/><use href="#h21" x="860" y="12"/><use href="#gmn" x="868" y="12"/></g><g fill="#000"><use href="#h22" x="891" y="12"/><use href="#h23" x="900" y="12"/></g><g fill="#fff"><use href="#h22" x="931" y="12"/><use href="#h24" x="940" y="12"/><use href="#g9" x="948" y="12"/><use href="#g1" x="954" y="12"/><use href="#h23" x="960" y="12"/></g><g fill="#000"><use href="#g2" x="13" y="61"/><use href="#g5" x="19" y="61"/><use href="#gsl" x="25" y="61"/><use href="#g0" x="31" y="61"/><use href="#g4" x="37" y="61"/><use href="#gsl" x="43" y="61"/><use href="#g2" x="49" y="61"/><use href="#g3" x="55" y="61"/></g><g fill="#000"><use href="#gmn" x="109" y="61"/></g><g fill="#000"><use href="#gmn" x="159" y="61"/></g><g fill="#000"><use href="#gmn" x="209" y="61"/></g><g fill="#000"><use href="#gmn" x="259" y="61"/></g><g fill="#000"><use href="#gmn" x="309" y="61"/></g><g fill="#000"><use href="#gmn" x="359" y="61"/></g><g fill="#000"><use href="#gmn" x="409" y="61"/></g><g fill="#000"><use href="#gmn" x="459" y="61"/></g><g fill="#000"><use href="#gmn" x="509" y="61"/></g><g fill="#000"><use href="#gmn" x="559" y="61"/></g><g fill="#000"><use href="#gmn" x="609" y="61"/></g><g fill="#000"><use href="#gmn" x="659" y="61"/></g><g fill="#000"><use href="#gmn" x="709" y="61"/></g><g fill="#000"><use href="#gmn" x="759" y="61"/></g><g fill="#000"><use href="#gmn" x="809" y="61"/></g><g fill="#000"><use href="#gmn" x="864" y="61"/></g><g fill="#000"><use href="#gmn" x="914" y="61"/></g><g fill="#000"><use href="#gmn" x="964" y="61"/></g><g fill="#000"><use href="#g2" x="13" y="86"/><use href="#g5" x="19" y="86"/><use href="#gsl" x="25" y="86"/><use href="#g0" x="31" y="86"/><use href="#g4" x="37" y="86"/><use href="#gsl" x="43" y="86"/><use href="#g2" x="49" y="86"/><use href="#g2" x="55" y="86"/></g><g fill="#000"><use href="#g2" x="87" y="86"/><use href="#gcm" x="93" y="86"/><use href="#g4" x="97" y="86"/><use href="#g1" x="103" y="86"/><use href="#g5" x="109" y="86"/></g><g fill="#000"><use href="#g2" x="137" y="86"/><use href="#gcm" x="143" y="86"/><use href="#g3" x="147" y="86"/><use href="#g8" x="153" y="86"/><use href="#g0" x="159" y="86"/></g><g fill="#000"><use href="#g2" x="187" y="86"/><use href="#gcm" x="193" y="86"/><use href="#g3" x="197" y="86"/><use href="#g3" x="203" y="86"/><use href="#g0" x="209" y="86"/></g><g fill="#000"><use href="#g2" x="237" y="86"/><use href="#gcm" x="243" y="86"/><use href="#g4" x="247" y="86"/><use href="#g4" x="253" y="86"/><use href="#g1" x="259" y="86"/></g><g fill="#000"><use href="#g2" x="287" y="86"/><use href="#gcm" x="293" y="86"/><use href="#g6" x="297" y="86"/><use href="#g2" x="303" y="86"/><use href="#g1" x="309" y="86"/></g><g fill="#000"><use href="#g2" x="337" y="86"/><use href="#gcm" x="343" y="86"/><use href="#g5" x="347" y="86"/><use href="#g7" x="353" y="86"/><use href="#g8" x="359" y="86"/></g><g fill="#000"><use href="#g2" x="387" y="86"/><use href="#gcm" x="393" y="86"/><use href="#g4" x="397" y="86"/><use href="#g9" x="403" y="86"/><use href="#g0" x="409" y="86"/></g><g fill="#000"><use href="#g2" x="437" y="86"/><use href="#gcm" x="443" y="86"/><use href="#g3" x="447" y="86"/><use href="#g3" x="453" y="86"/><use href="#g6" x="459" y="86"/></g><g fill="#000"><use href="#g2" x="487" y="86"/><use href="#gcm" x="493" y="86"/><use href="#g6" x="497" y="86"/><use href="#g0" x="503" y="86"/><use href="#g0" x="509" y="86"/></g><g fill="#000"><use href="#g2" x="537" y="86"/><use href="#gcm" x="543" y="86"/><use href="#g5" x="547" y="86"/><use href="#g0" x="553" y="86"/><use href="#g0" x="559" y="86"/></g><g fill="#000"><use href="#g2" x="587" y="86"/><use href="#gcm" x="593" y="86"/><use href="#g4" x="597" y="86"/><use href="#g1" x="603" y="86"/><use href="#g4" x="609" y="86"/></g><g fill="#000"><use href="#g2" x="637" y="86"/><use href="#gcm" x="643" y="86"/><use href="#g3" x="647" y="86"/><use href="#g6" x="653" y="86"/><use href="#g3" x="659" y="86"/></g><g fill="#000"><use href="#g2" x="687" y="86"/><use href="#gcm" x="693" y="86"/><use href="#g6" x="697" y="86"/><use href="#g4" x="703" y="86"/><use href="#g8" x="709" y="86"/></g><g fill="#000"><use href="#g2" x="737" y="86"/><use href="#gcm" x="743" y="86"/><use href="#g5" x="747" y="86"/><use href="#g6" x="753" y="86"/><use href="#g7" x="759" y="86"/></g><g fill="#000"><use href="#g2" x="787" y="86"/><use href="#gcm" x="793" y="86"/><use href="#g9" x="797" y="86"/><use href="#g2" x="803" y="86"/><use href="#g3" x="809" y="86"/></g><g fill="#000"><use href="#g8" x="842" y="86"/><use href="#gcm" x="848" y="86"/><use href="#g6" x="852" y="86"/><use href="#g7" x="858" y="86"/><use href="#g6" x="864" y="86"/></g><g fill="#000"><use href="#g2" x="892" y="86"/><use href="#gcm" x="898" y="86"/><use href="#g7" x="902" y="86"/><use href="#g1" x="908" y="86"/><use href="#g0" x="914" y="86"/></g><g fill="#000"><use href="#g2" x="942" y="86"/><use href="#gcm" x="948" y="86"/><use href="#g9" x="952" y="86"/><use href="#g1" x="958" y="86"/><use href="#g0" x="964" y="86"/></g><g fill="#000"><use href="#g2" x="13" y="111"/><use href="#g5" x="19" y="111"/><use href="#gsl" x="25" y="111"/><use href="#g0" x="31" y="111"/><use href="#g4" x="37" y="111"/><use href="#gsl" x="43" y="111"/><use href="#g2" x="49" y="111"/><use href="#g1" x="55" y="111"/></g><g fill="#000"><use href="#g2" x="87" y="111"/><use href="#gcm" x="93" y="111"/><use href="#g4" x="97" y="111"/><use href="#g1" x="103" y="111"/><use href="#g6" x="109" y="111"/></g><g fill="#000"><use href="#g2" x="137" y="111"/><use href="#gcm" x="143" y="111"/><use href="#g3" x="147" y="111"/><use href="#g7" x="153" y="111"/><use href="#g9" x="159" y="111"/></g><g fill="#000"><use href="#g2" x="187" y="111"/><use href="#gcm" x="193" y="111"/><use href="#g3" x="197" y="111"/><use href="#g3" x="203" y="111"/><use href="#g1" x="209" y="111"/></g><g fill="#000"><use href="#g2" x="237" y="111"/><use href="#gcm" x="243" y="111"/><use href="#g4" x="247" y="111"/><use href="#g4" x="253" y="111"/><use href="#g1" x="259" y="111"/></g><g fill="#000"><use href="#g2" x="287" y="111"/><use href="#gcm" x="293" y="111"/><use href="#g6" x="297" y="111"/><use href="#g0" x="303" y="111"/><use href="#g2" x="309" y="111"/></g><g fill="#000"><use href="#g2" x="337" y="111"/><use href="#gcm" x="343" y="111"/><use href="#g5" x="347" y="111"/><use href="#g5" x="353" y="111"/><use href="#g1" x="359" y="111"/></g><g fill="#000"><use href="#g2" x="387" y="111"/><use href="#gcm" x="393" y="111"/><use href="#g4" x="397" y="111"/><use href="#g5" x="403" y="111"/><use href="#g4" x="409" y="111"/></g><g fill="#000"><use href="#g2" x="437" y="111"/><use href="#gcm" x="443" y="111"/><use href="#g2" x="447" y="111"/><use href="#g9" x="453" y="111"/><use href="#g9" x="459" y="111"/></g><g fill="#000"><use href="#g2" x="487" y="111"/><use href="#gcm" x="493" y="111"/><use href="#g5" x="497" y="111"/><use href="#g9" x="503" y="111"/><use href="#g0" x="509" y="111"/></g><g fill="#000"><use href="#g2" x="537" y="111"/><use href="#gcm" x="543" y="111"/><use href="#g4" x="547" y="111"/><use href="#g9" x="553" y="111"/><use href="#g8" x="559" y="111"/></g><g fill="#000"><use href="#g2" x="587" y="111"/><use href="#gcm" x="593" y="111"/><use href="#g4" x="597" y="111"/><use href="#g1" x="603" y="111"/><use href="#g3" x="609" y="111"/></g><g fill="#000"><use href="#g2" x="637" y="111"/><use href="#gcm" x="643" y="111"/><use href="#g3" x="647" y="111"/><use href="#g5" x="653" y="111"/><use href="#g6" x="659" y="111"/></g><g fill="#000"><use href="#g2" x="687" y="111"/><use href="#gcm" x="693" y="111"/><use href="#g6" x="697" y="111"/><use href="#g4" x="703" y="111"/><use href="#g2" x="709" y="111"/></g><g fill="#000"><use href="#g2" x="737" y="111"/><use href="#gcm" x="743" y="111"/><use href="#g5" x="747" y="111"/><use href="#g6" x="753" y="111"/><use href="#g6" x="759" y="111"/></g><g fill="#000"><use href="#g2" x="787" y="111"/><use href="#gcm" x="793" y="111"/><use href="#g9" x="797" y="111"/><use href="#g1" x="803" y="111"/><use href="#g8" x="809" y="111"/></g><g fill="#000"><use href="#g8" x="842" y="111"/><use href="#gcm" x="848" y="111"/><use href="#g6" x="852" y="111"/><use href="#g7" x="858" y="111"/><use href="#g1" x="864" y="111"/></g><g fill="#000"><use href="#g2" x="892" y="111"/><use href="#gcm" x="898" y="111"/><use href="#g7" x="902" y="111"/><use href="#g1" x="908" y="111"/><use href="#g0" x="914" y="111"/></g><g fill="#000"><use href="#g2" x="942" y="111"/><use href="#gcm" x="948" y="111"/><use href="#g9" x="952" y="111"/><use href="#g1" x="958" y="111"/><use href="#g0" x="964" y="111"/></g><g fill="#000"><use href="#g2" x="13" y="137"/><use href="#g5" x="19" y="137"/><use href="#gsl" x="25" y="137"/><use href="#g0" x="31" y="137"/><use href="#g4" x="37" y="137"/><use href="#gsl" x="43" y="137"/><use href="#g1" x="49" y="137"/><use href="#g8" x="55" y="137"/></g><g fill="#000"><use href="#g2" x="87" y="137"/><use href="#gcm" x="93" y="137"/><use href="#g4" x="97" y="137"/><use href="#g2" x="103" y="137"/><use href="#g4" x="109" y="137"/></g><g fill="#000"><use href="#g2" x="137" y="137"/><use href="#gcm" x="143" y="137"/><use href="#g4" x="147" y="137"/><use href="#g0" x="153" y="137"/><use href="#g3" x="159" y="137"/></g><g fill="#000"><use href="#g2" x="187" y="137"/><use href="#gcm" x="193" y="137"/><use href="#g3" x="197" y="137"/><use href="#g6" x="203" y="137"/><use href="#g2" x="209" y="137"/></g><g fill="#000"><use href="#g2" x="237" y="137"/><use href="#gcm" x="243" y="137"/><use href="#g4" x="247" y="137"/><use href="#g6" x="253" y="137"/><use href="#g4" x="259" y="137"/></g><g fill="#000"><use href="#g2" x="287" y="137"/><use href="#gcm" x="293" y="137"/><use href="#g6" x="297" y="137"/><use href="#g2" x="303" y="137"/><use href="#g0" x="309" y="137"/></g><g fill="#000"><use href="#g2" x="337" y="137"/><use href="#gcm" x="343" y="137"/><use href="#g5" x="347" y="137"/><use href="#g6" x="353" y="137"/><use href="#g1" x="359" y="137"/></g><g fill="#000"><use href="#g2" x="387" y="137"/><use href="#gcm" x="393" y="137"/><use href="#g4" x="397" y="137"/><use href="#g6" x="403" y="137"/><use href="#g4" x="409" y="137"/></g><g fill="#000"><use href="#g2" x="437" y="137"/><use href="#gcm" x="443" y="137"/><use href="#g3" x="447" y="137"/><use href="#g0" x="453" y="137"/><use href="#g9" x="459" y="137"/></g><g fill="#000"><use href="#g2" x="487" y="137"/><use href="#gcm" x="493" y="137"/><use href="#g6" x="497" y="137"/><use href="#g2" x="503" y="137"/><use href="#g4" x="509" y="137"/></g><g fill="#000"><use href="#g2" x="537" y="137"/><use href="#gcm" x="543" y="137"/><use href="#g5" x="547" y="137"/><use href="#g0" x="553" y="137"/><use href="#g2" x="559" y="137"/></g><g fill="#000"><use href="#g2" x="587" y="137"/><use href="#gcm" x="593" y="137"/><use href="#g4" x="597" y="137"/><use href="#g2" x="603" y="137"/><use href="#g2" x="609" y="137"/></g><g fill="#000"><use href="#g2" x="637" y="137"/><use href="#gcm" x="643" y="137"/><use href="#g3" x="647" y="137"/><use href="#g7" x="653" y="137"/><use href="#g5" x="659" y="137"/></g><g fill="#000"><use href="#g2" x="687" y="137"/><use href="#gcm" x="693" y="137"/><use href="#g6" x="697" y="137"/><use href="#g6" x="703" y="137"/><use href="#g5" x="709" y="137"/></g><g fill="#000"><use href="#g2" x="737" y="137"/><use href="#gcm" x="743" y="137"/><use href="#g5" x="747" y="137"/><use href="#g9" x="753" y="137"/><use href="#g0" x="759" y="137"/></g><g fill="#000"><use href="#g2" x="787" y="137"/><use href="#gcm" x="793" y="137"/><use href="#g9" x="797" y="137"/><use href="#g4" x="803" y="137"/><use href="#g2" x="809" y="137"/></g><g fill="#000"><use href="#g8" x="842" y="137"/><use href="#gcm" x="848" y="137"/><use href="#g6" x="852" y="137"/><use href="#g9" x="858" y="137"/><use href="#g5" x="864" y="137"/></g><g fill="#000"><use href="#g2" x="892" y="137"/><use href="#gcm" x="898" y="137"/><use href="#g7" x="902" y="137"/><use href="#g1" x="908" y="137"/><use href="#g0" x="914" y="137"/></g><g fill="#000"><use href="#g2" x="942" y="137"/><use href="#gcm" x="948" y="137"/><use href="#g9" x="952" y="137"/><use href="#g1" x="958" y="137"/><use href="#g0" x="964" y="137"/></g><g fill="#000"><use href="#g2" x="13" y="162"/><use href="#g5" x="19" y="162"/><use href="#gsl" x="25" y="162"/><use href="#g0" x="31" y="162"/><use href="#g4" x="37" y="162"/><use href="#gsl" x="43" y="162"/><use href="#g1" x="49" y="162"/><use href="#g7" x="55" y="162"/></g><g fill="#000"><use href="#g2" x="87" y="162"/><use href="#gcm" x="93" y="162"/><use href="#g4" x="97" y="162"/><use href="#g6" x="103" y="162"/><use href="#g7" x="109" y="162"/></g><g fill="#000"><use href="#g2" x="137" y="162"/><use href="#gcm" x="143" y="162"/><use href="#g4" x="147" y="162"/><use href="#g2" x="153" y="162"/><use href="#g8" x="159" y="162"/></g><g fill="#000"><use href="#g2" x="187" y="162"/><use href="#gcm" x="193" y="162"/><use href="#g3" x="197" y="162"/><use href="#g8" x="203" y="162"/><use href="#g5" x="209" y="162"/></g><g fill="#000"><use href="#g2" x="237" y="162"/><use href="#gcm" x="243" y="162"/><use href="#g4" x="247" y="162"/><use href="#g8" x="253" y="162"/><use href="#g3" x="259" y="162"/></g><g fill="#000"><use href="#g2" x="287" y="162"/><use href="#gcm" x="293" y="162"/><use href="#g6" x="297" y="162"/><use href="#g4" x="303" y="162"/><use href="#g5" x="309" y="162"/></g><g fill="#000"><use href="#g2" x="337" y="162"/><use href="#gcm" x="343" y="162"/><use href="#g5" x="347" y="162"/><use href="#g7" x="353" y="162"/><use href="#g9" x="359" y="162"/></g><g fill="#000"><use href="#g2" x="387" y="162"/><use href="#gcm" x="393" y="162"/><use href="#g4" x="397" y="162"/><use href="#g9" x="403" y="162"/><use href="#g0" x="409" y="162"/></g><g fill="#000"><use href="#g2" x="437" y="162"/><use href="#gcm" x="443" y="162"/><use href="#g3" x="447" y="162"/><use href="#g3" x="453" y="162"/><use href="#g5" x="459" y="162"/></g><g fill="#000"><use href="#g2" x="487" y="162"/><use href="#gcm" x="493" y="162"/><use href="#g6" x="497" y="162"/><use href="#g5" x="503" y="162"/><use href="#g0" x="509" y="162"/></g><g fill="#000"><use href="#g2" x="537" y="162"/><use href="#gcm" x="543" y="162"/><use href="#g5" x="547" y="162"/><use href="#g0" x="553" y="162"/><use href="#g3" x="559" y="162"/></g><g fill="#000"><use href="#g2" x="587" y="162"/><use href="#gcm" x="593" y="162"/><use href="#g4" x="597" y="162"/><use href="#g3" x="603" y="162"/><use href="#g2" x="609" y="162"/></g><g fill="#000"><use href="#g2" x="637" y="162"/><use href="#gcm" x="643" y="162"/><use href="#g3" x="647" y="162"/><use href="#g9" x="653" y="162"/><use href="#g9" x="659" y="162"/></g><g fill="#000"><use href="#g2" x="687" y="162"/><use href="#gcm" x="693" y="162"/><use href="#g6" x="697" y="162"/><use href="#g9" x="703" y="162"/><use href="#g4" x="709" y="162"/></g><g fill="#000"><use href="#g2" x="737" y="162"/><use href="#gcm" x="743" y="162"/><use href="#g6" x="747" y="162"/><use href="#g0" x="753" y="162"/><use href="#g2" x="759" y="162"/></g><g fill="#000"><use href="#g2" x="787" y="162"/><use href="#gcm" x="793" y="162"/><use href="#g9" x="797" y="162"/><use href="#g6" x="803" y="162"/><use href="#g8" x="809" y="162"/></g><g fill="#000"><use href="#g8" x="842" y="162"/><use href="#gcm" x="848" y="162"/><use href="#g7" x="852" y="162"/><use href="#g2" x="858" y="162"/><use href="#g2" x="864" y="162"/></g><g fill="#000"><use href="#g2" x="892" y="162"/><use href="#gcm" x="898" y="162"/><use href="#g7" x="902" y="162"/><use href="#g1" x="908" y="162"/><use href="#g0" x="914" y="162"/></g><g fill="#000"><use href="#g2" x="942" y="162"/><use href="#gcm" x="948" y="162"/><use href="#g9" x="952" y="162"/><use href="#g1" x="958" y="162"/><use href="#g0" x="964" y="162"/></g><g fill="#000"><use href="#g2" x="13" y="187"/><use href="#g5" x="19" y="187"/><use href="#gsl" x="25" y="187"/><use href="#g0" x="31" y="187"/><use href="#g4" x="37" y="187"/><use href="#gsl" x="43" y="187"/><use href="#g1" x="49" y="187"/><use href="#g6" x="55" y="187"/></g><g fill="#000"><use href="#g2" x="87" y="187"/><use href="#gcm" x="93" y="187"/><use href="#g4" x="97" y="187"/><use href="#g6" x="103" y="187"/><use href="#g7" x="109" y="187"/></g><g fill="#000"><use href="#g2" x="137" y="187"/><use href="#gcm" x="143" y="187"/><use href="#g4" x="147" y="187"/><use href="#g0" x="153" y="187"/><use href="#g4" x="159" y="187"/></g><g fill="#000"><use href="#g2" x="187" y="187"/><use href="#gcm" x="193" y="187"/><use href="#g3" x="197" y="187"/><use href="#g5" x="203" y="187"/><use href="#g1" x="209" y="187"/></g><g fill="#000"><use href="#g2" x="237" y="187"/><use href="#gcm" x="243" y="187"/><use href="#g4" x="247" y="187"/><use href="#g6" x="253" y="187"/><use href="#g3" x="259" y="187"/></g><g fill="#000"><use href="#g2" x="287" y="187"/><use href="#gcm" x="293" y="187"/><use href="#g6" x="297" y="187"/><use href="#g2" x="303" y="187"/><use href="#g9" x="309" y="187"/></g><g fill="#000"><use href="#g2" x="337" y="187"/><use href="#gcm" x="343" y="187"/><use href="#g5" x="347" y="187"/><use href="#g6" x="353" y="187"/><use href="#g6" x="359" y="187"/></g><g fill="#000"><use href="#g2" x="387" y="187"/><use href="#gcm" x="393" y="187"/><use href="#g4" x="397" y="187"/><use href="#g6" x="403" y="187"/><use href="#g4" x="409" y="187"/></g><g fill="#000"><use href="#g2" x="437" y="187"/><use href="#gcm" x="443" y="187"/><use href="#g3" x="447" y="187"/><use href="#g1" x="453" y="187"/><use href="#g0" x="459" y="187"/></g><g fill="#000"><use href="#g2" x="487" y="187"/><use href="#gcm" x="493" y="187"/><use href="#g6" x="497" y="187"/><use href="#g3" x="503" y="187"/><use href="#g6" x="509" y="187"/></g><g fill="#000"><use href="#g2" x="537" y="187"/><use href="#gcm" x="543" y="187"/><use href="#g5" x="547" y="187"/><use href="#g0" x="553" y="187"/><use href="#g0" x="559" y="187"/></g><g fill="#000"><use href="#g2" x="587" y="187"/><use href="#gcm" x="593" y="187"/><use href="#g4" x="597" y="187"/><use href="#g2" x="603" y="187"/><use href="#g4" x="609" y="187"/></g><g fill="#000"><use href="#g2" x="637" y="187"/><use href="#gcm" x="643" y="187"/><use href="#g3" x="647" y="187"/><use href="#g6" x="653" y="187"/><use href="#g1" x="659" y="187"/></g><g fill="#000"><use href="#g2" x="687" y="187"/><use href="#gcm" x="693" y="187"/><use href="#g6" x="697" y="187"/><use href="#g6" x="703" y="187"/><use href="#g4" x="709" y="187"/></g><g fill="#000"><use href="#g2" x="737" y="187"/><use href="#gcm" x="743" y="187"/><use href="#g5" x="747" y="187"/><use href="#g9" x="753" y="187"/><use href="#g1" x="759" y="187"/></g><g fill="#000"><use href="#g2" x="787" y="187"/><use href="#gcm" x="793" y="187"/><use href="#g9" x="797" y="187"/><use href="#g4" x="803" y="187"/><use href="#g1" x="809" y="187"/></g><g fill="#000"><use href="#g8" x="842" y="187"/><use href="#gcm" x="848" y="187"/><use href="#g6" x="852" y="187"/><use href="#g9" x="858" y="187"/><use href="#g6" x="864" y="187"/></g><g fill="#000"><use href="#g2" x="892" y="187"/><use href="#gcm" x="898" y="187"/><use href="#g7" x="902" y="187"/><use href="#g2" x="908" y="187"/><use href="#g0" x="914" y="187"/></g><g fill="#000"><use href="#g2" x="942" y="187"/><use href="#gcm" x="948" y="187"/><use href="#g9" x="952" y="187"/><use href="#g1" x="958" y="187"/><use href="#g0" x="964" y="187"/></g><g fill="#000"><use href="#g2" x="13" y="213"/><use href="#g5" x="19" y="213"/><use href="#gsl" x="25" y="213"/><use href="#g0" x="31" y="213"/><use href="#g4" x="37" y="213"/><use href="#gsl" x="43" y="213"/><use href="#g1" x="49" y="213"/><use href="#g5" x="55" y="213"/></g><g fill="#000"><use href="#g2" x="87" y="213"/><use href="#gcm" x="93" y="213"/><use href="#g4" x="97" y="213"/><use href="#g9" x="103" y="213"/><use href="#g2" x="109" y="213"/></g><g fill="#000"><use href="#g2" x="137" y="213"/><use href="#gcm" x="143" y="213"/><use href="#g4" x="147" y="213"/><use href="#g4" x="153" y="213"/><use href="#g4" x="159" y="213"/></g><g fill="#000"><use href="#g2" x="187" y="213"/><use href="#gcm" x="193" y="213"/><use href="#g3" x="197" y="213"/><use href="#g9" x="203" y="213"/><use href="#g9" x="209" y="213"/></g><g fill="#000"><use href="#g2" x="237" y="213"/><use href="#gcm" x="243" y="213"/><use href="#g4" x="247" y="213"/><use href="#g9" x="253" y="213"/><use href="#g9" x="259" y="213"/></g><g fill="#000"><use href="#g2" x="287" y="213"/><use href="#gcm" x="293" y="213"/><use href="#g6" x="297" y="213"/><use href="#g6" x="303" y="213"/><use href="#g4" x="309" y="213"/></g><g fill="#000"><use href="#g2" x="337" y="213"/><use href="#gcm" x="343" y="213"/><use href="#g5" x="347" y="213"/><use href="#g9" x="353" y="213"/><use href="#g7" x="359" y="213"/></g><g fill="#000"><use href="#g2" x="387" y="213"/><use href="#gcm" x="393" y="213"/><use href="#g5" x="397" y="213"/><use href="#g0" x="403" y="213"/><use href="#g1" x="409" y="213"/></g><g fill="#000"><use href="#g2" x="437" y="213"/><use href="#gcm" x="443" y="213"/><use href="#g3" x="447" y="213"/><use href="#g4" x="453" y="213"/><use href="#g9" x="459" y="213"/></g><g fill="#000"><use href="#g2" x="487" y="213"/><use href="#gcm" x="493" y="213"/><use href="#g6" x="497" y="213"/><use href="#g7" x="503" y="213"/><use href="#g2" x="509" y="213"/></g><g fill="#000"><use href="#g2" x="537" y="213"/><use href="#gcm" x="543" y="213"/><use href="#g5" x="547" y="213"/><use href="#g0" x="553" y="213"/><use href="#g5" x="559" y="213"/></g><g fill="#000"><use href="#g2" x="587" y="213"/><use href="#gcm" x="593" y="213"/><use href="#g4" x="597" y="213"/><use href="#g4" x="603" y="213"/><use href="#g2" x="609" y="213"/></g><g fill="#000"><use href="#g2" x="637" y="213"/><use href="#gcm" x="643" y="213"/><use href="#g4" x="647" y="213"/><use href="#g0" x="653" y="213"/><use href="#g2" x="659" y="213"/></g><g fill="#000"><use href="#g2" x="687" y="213"/><use href="#gcm" x="693" y="213"/><use href="#g7" x="697" y="213"/><use href="#g0" x="703" y="213"/><use href="#g9" x="709" y="213"/></g><g fill="#000"><use href="#g2" x="737" y="213"/><use href="#gcm" x="743" y="213"/><use href="#g6" x="747" y="213"/><use href="#g1" x="753" y="213"/><use href="#g4" x="759" y="213"/></g><g fill="#000"><use href="#g2" x="787" y="213"/><use href="#gcm" x="793" y="213"/><use href="#g9" x="797" y="213"/><use href="#g8" x="803" y="213"/><use href="#g4" x="809" y="213"/></g><g fill="#000"><use href="#g8" x="842" y="213"/><use href="#gcm" x="848" y="213"/><use href="#g7" x="852" y="213"/><use href="#g3" x="858" y="213"/><use href="#g9" x="864" y="213"/></g><g fill="#000"><use href="#g2" x="892" y="213"/><use href="#gcm" x="898" y="213"/><use href="#g7" x="902" y="213"/><use href="#g2" x="908" y="213"/><use href="#g0" x="914" y="213"/></g><g fill="#000"><use href="#g2" x="942" y="213"/><use href="#gcm" x="948" y="213"/><use href="#g9" x="952" y="213"/><use href="#g2" x="958" y="213"/><use href="#g0" x="964" y="213"/></g><g fill="#000"><use href="#g2" x="13" y="238"/><use href="#g5" x="19" y="238"/><use href="#gsl" x="25" y="238"/><use href="#g0" x="31" y="238"/><use href="#g4" x="37" y="238"/><use href="#gsl" x="43" y="238"/><use href="#g1" x="49" y="238"/><use href="#g4" x="55" y="238"/></g><g fill="#000"><use href="#g2" x="87" y="238"/><use href="#gcm" x="93" y="238"/><use href="#g4" x="97" y="238"/><use href="#g9" x="103" y="238"/><use href="#g9" x="109" y="238"/></g><g fill="#000"><use href="#g2" x="137" y="238"/><use href="#gcm" x="143" y="238"/><use href="#g4" x="147" y="238"/><use href="#g6" x="153" y="238"/><use href="#g4" x="159" y="238"/></g><g fill="#000"><use href="#g2" x="187" y="238"/><use href="#gcm" x="193" y="238"/><use href="#g4" x="197" y="238"/><use href="#g0" x="203" y="238"/><use href="#g8" x="209" y="238"/></g><g fill="#000"><use href="#g2" x="237" y="238"/><use href="#gcm" x="243" y="238"/><use href="#g5" x="247" y="238"/><use href="#g0" x="253" y="238"/><use href="#g9" x="259" y="238"/></g><g fill="#000"><use href="#g2" x="287" y="238"/><use href="#gcm" x="293" y="238"/><use href="#g6" x="297" y="238"/><use href="#g9" x="303" y="238"/><use href="#g1" x="309" y="238"/></g><g fill="#000"><use href="#g2" x="337" y="238"/><use href="#gcm" x="343" y="238"/><use href="#g6" x="347" y="238"/><use href="#g2" x="353" y="238"/><use href="#g5" x="359" y="238"/></g><g fill="#000"><use href="#g2" x="387" y="238"/><use href="#gcm" x="393" y="238"/><use href="#g5" x="397" y="238"/><use href="#g3" x="403" y="238"/><use href="#g1" x="409" y="238"/></g><g fill="#000"><use href="#g2" x="437" y="238"/><use href="#gcm" x="443" y="238"/><use href="#g3" x="447" y="238"/><use href="#g9" x="453" y="238"/><use href="#g9" x="459" y="238"/></g><g fill="#000"><use href="#g2" x="487" y="238"/><use href="#gcm" x="493" y="238"/><use href="#g6" x="497" y="238"/><use href="#g9" x="503" y="238"/><use href="#g2" x="509" y="238"/></g><g fill="#000"><use href="#g2" x="537" y="238"/><use href="#gcm" x="543" y="238"/><use href="#g5" x="547" y="238"/><use href="#g0" x="553" y="238"/><use href="#g8" x="559" y="238"/></g><g fill="#000"><use href="#g2" x="587" y="238"/><use href="#gcm" x="593" y="238"/><use href="#g4" x="597" y="238"/><use href="#g4" x="603" y="238"/><use href="#g8" x="609" y="238"/></g><g fill="#000"><use href="#g2" x="637" y="238"/><use href="#gcm" x="643" y="238"/><use href="#g4" x="647" y="238"/><use href="#g1" x="653" y="238"/><use href="#g6" x="659" y="238"/></g><g fill="#000"><use href="#g2" x="687" y="238"/><use href="#gcm" x="693" y="238"/><use href="#g7" x="697" y="238"/><use href="#g2" x="703" y="238"/><use href="#g3" x="709" y="238"/></g><g fill="#000"><use href="#g2" x="737" y="238"/><use href="#gcm" x="743" y="238"/><use href="#g6" x="747" y="238"/><use href="#g2" x="753" y="238"/><use href="#g5" x="759" y="238"/></g><g fill="#000"><use href="#g2" x="787" y="238"/><use href="#gcm" x="793" y="238"/><use href="#g9" x="797" y="238"/><use href="#g9" x="803" y="238"/><use href="#g8" x="809" y="238"/></g><g fill="#000"><use href="#g8" x="842" y="238"/><use href="#gcm" x="848" y="238"/><use href="#g7" x="852" y="238"/><use href="#g5" x="858" y="238"/><use href="#g0" x="864" y="238"/></g><g fill="#000"><use href="#g2" x="892" y="238"/><use href="#gcm" x="898" y="238"/><use href="#g7" x="902" y="238"/><use href="#g2" x="908" y="238"/><use href="#g0" x="914" y="238"/></g><g fill="#000"><use href="#g2" x="942" y="238"/><use href="#gcm" x="948" y="238"/><use href="#g9" x="952" y="238"/><use href="#g2" x="958" y="238"/><use href="#g0" x="964" y="238"/></g><g fill="#000"><use href="#g2" x="13" y="264"/><use href="#g5" x="19" y="264"/><use href="#gsl" x="25" y="264"/><use href="#g0" x="31" y="264"/><use href="#g4" x="37" y="264"/><use href="#gsl" x="43" y="264"/><use href="#g1" x="49" y="264"/><use href="#g1" x="55" y="264"/></g><g fill="#000"><use href="#g2" x="87" y="264"/><use href="#gcm" x="93" y="264"/><use href="#g5" x="97" y="264"/><use href="#g1" x="103" y="264"/><use href="#g3" x="109" y="264"/></g><g fill="#000"><use href="#g2" x="137" y="264"/><use href="#gcm" x="143" y="264"/><use href="#g4" x="147" y="264"/><use href="#g5" x="153" y="264"/><use href="#g9" x="159" y="264"/></g><g fill="#000"><use href="#g2" x="187" y="264"/><use href="#gcm" x="193" y="264"/><use href="#g4" x="197" y="264"/><use href="#g1" x="203" y="264"/><use href="#g1" x="209" y="264"/></g><g fill="#000"><use href="#g2" x="237" y="264"/><use href="#gcm" x="243" y="264"/><use href="#g5" x="247" y="264"/><use href="#g1" x="253" y="264"/><use href="#g0" x="259" y="264"/></g><g fill="#000"><use href="#g2" x="287" y="264"/><use href="#gcm" x="293" y="264"/><use href="#g6" x="297" y="264"/><use href="#g9" x="303" y="264"/><use href="#g6" x="309" y="264"/></g><g fill="#000"><use href="#g2" x="337" y="264"/><use href="#gcm" x="343" y="264"/><use href="#g6" x="347" y="264"/><use href="#g4" x="353" y="264"/><use href="#g5" x="359" y="264"/></g><g fill="#000"><use href="#g2" x="387" y="264"/><use href="#gcm" x="393" y="264"/><use href="#g5" x="397" y="264"/><use href="#g4" x="403" y="264"/><use href="#g4" x="409" y="264"/></g><g fill="#000"><use href="#g2" x="437" y="264"/><use href="#gcm" x="443" y="264"/><use href="#g4" x="447" y="264"/><use href="#g1" x="453" y="264"/><use href="#g1" x="459" y="264"/></g><g fill="#000"><use href="#g2" x="487" y="264"/><use href="#gcm" x="493" y="264"/><use href="#g6" x="497" y="264"/><use href="#g8" x="503" y="264"/><use href="#g4" x="509" y="264"/></g><g fill="#000"><use href="#g2" x="537" y="264"/><use href="#gcm" x="543" y="264"/><use href="#g6" x="547" y="264"/><use href="#g2" x="553" y="264"/><use href="#g1" x="559" y="264"/></g><g fill="#000"><use href="#g2" x="587" y="264"/><use href="#gcm" x="593" y="264"/><use href="#g4" x="597" y="264"/><use href="#g4" x="603" y="264"/><use href="#g2" x="609" y="264"/></g><g fill="#000"><use href="#g2" x="637" y="264"/><use href="#gcm" x="643" y="264"/><use href="#g4" x="647" y="264"/><use href="#g1" x="653" y="264"/><use href="#g3" x="659" y="264"/></g><g fill="#000"><use href="#g2" x="687" y="264"/><use href="#gcm" x="693" y="264"/><use href="#g7" x="697" y="264"/><use href="#g2" x="703" y="264"/><use href="#g2" x="709" y="264"/></g><g fill="#000"><use href="#g2" x="737" y="264"/><use href="#gcm" x="743" y="264"/><use href="#g6" x="747" y="264"/><use href="#g2" x="753" y="264"/><use href="#g4" x="759" y="264"/></g><g fill="#000"><use href="#g2" x="787" y="264"/><use href="#gcm" x="793" y="264"/><use href="#g9" x="797" y="264"/><use href="#g9" x="803" y="264"/><use href="#g6" x="809" y="264"/></g><g fill="#000"><use href="#g8" x="842" y="264"/><use href="#gcm" x="848" y="264"/><use href="#g7" x="852" y="264"/><use href="#g4" x="858" y="264"/><use href="#g7" x="864" y="264"/></g><g fill="#000"><use href="#g2" x="892" y="264"/><use href="#gcm" x="898" y="264"/><use href="#g7" x="902" y="264"/><use href="#g2" x="908" y="264"/><use href="#g0" x="914" y="264"/></g><g fill="#000"><use href="#g2" x="942" y="264"/><use href="#gcm" x="948" y="264"/><use href="#g9" x="952" y="264"/><use href="#g2" x="958" y="264"/><use href="#g0" x="964" y="264"/></g><g fill="#0000ff"><use href="#h0" x="8" y="298"/><use href="#h1" x="20" y="298"/><use href="#g1" x="32" y="298"/><use href="#h19" x="38" y="298"/></g><g fill="#0000ff"><use href="#h0" x="50" y="298"/><use href="#h1" x="62" y="298"/><use href="#g2" x="74" y="298"/><use href="#h19" x="80" y="298"/></g><g fill="#e00000"><use href="#h0" x="92" y="298"/><use href="#h1" x="104" y="298"/><use href="#g3" x="116" y="298"/><use href="#h19" x="122" y="298"/></g><g fill="#8080ff"><use href="#h6" x="134" y="298"/><use href="#h7" x="146" y="298"/><use href="#g3" x="158" y="298"/><use href="#h19" x="164" y="298"/></g><g fill="#62cc00"><use href="#h10" x="176" y="298"/><use href="#h11" x="188" y="298"/><use href="#h20" x="200" y="298"/><use href="#h20" x="208" y="298"/><use href="#gmn" x="216" y="298"/></g><g fill="#000"><use href="#g3" x="506" y="312"/><use href="#gcm" x="512" y="312"/><use href="#g3" x="516" y="312"/><use href="#g0" x="522" y="312"/><use href="#g0" x="528" y="312"/></g><g fill="#000"><use href="#g3" x="506" y="336"/><use href="#gcm" x="512" y="336"/><use href="#g2" x="516" y="336"/><use href="#g0" x="522" y="336"/><use href="#g0" x="528" y="336"/></g><g fill="#000"><use href="#g3" x="506" y="361"/><use href="#gcm" x="512" y="361"/><use href="#g1" x="516" y="361"/><use href="#g0" x="522" y="361"/><use href="#g0" x="528" y="361"/></g><g fill="#000"><use href="#g3" x="506" y="386"/><use href="#gcm" x="512" y="386"/><use href="#g0" x="516" y="386"/><use href="#g0" x="522" y="386"/><use href="#g0" x="528" y="386"/></g><g fill="#000"><use href="#g2" x="506" y="411"/><use href="#gcm" x="512" y="411"/><use href="#g9" x="516" y="411"/><use href="#g0" x="522" y="411"/><use href="#g0" x="528" y="411"/></g><g fill="#000"><use href="#g2" x="506" y="436"/><use href="#gcm" x="512" y="436"/><use href="#g8" x="516" y="436"/><use href="#g0" x="522" y="436"/><use href="#g0" x="528" y="436"/></g><g fill="#000"><use href="#g2" x="506" y="460"/><use href="#gcm" x="512" y="460"/><use href="#g7" x="516" y="460"/><use href="#g0" x="522" y="460"/><use href="#g0" x="528" y="460"/></g><g fill="#000"><use href="#g2" x="506" y="485"/><use href="#gcm" x="512" y="485"/><use href="#g6" x="516" y="485"/><use href="#g0" x="522" y="485"/><use href="#g0" x="528" y="485"/></g><g fill="#000"><use href="#g2" x="506" y="510"/><use href="#gcm" x="512" y="510"/><use href="#g5" x="516" y="510"/><use href="#g0" x="522" y="510"/><use href="#g0" x="528" y="510"/></g><g fill="#000"><use href="#g2" x="506" y="535"/><use href="#gcm" x="512" y="535"/><use href="#g4" x="516" y="535"/><use href="#g0" x="522" y="535"/><use href="#g0" x="528" y="535"/></g><g fill="#000"><use href="#g2" x="506" y="559"/><use href="#gcm" x="512" y="559"/><use href="#g3" x="516" y="559"/><use href="#g0" x="522" y="559"/><use href="#g0" x="528" y="559"/></g><g fill="#000"><use href="#g0" x="32" y="585"/><use href="#g2" x="38" y="585"/></g><g fill="#000"><use href="#g0" x="64" y="585"/><use href="#g2" x="70" y="585"/><use href="#gsl" x="76" y="585"/><use href="#g0" x="82" y="585"/><use href="#g7" x="88" y="585"/></g><g fill="#000"><use href="#g0" x="113" y="585"/><use href="#g2" x="119" y="585"/><use href="#gsl" x="125" y="585"/><use href="#g1" x="131" y="585"/><use href="#g7" x="137" y="585"/></g><g fill="#000"><use href="#g0" x="194" y="585"/><use href="#g3" x="200" y="585"/></g><g fill="#000"><use href="#g0" x="219" y="585"/><use href="#g3" x="225" y="585"/><use href="#gsl" x="231" y="585"/><use href="#g0" x="237" y="585"/><use href="#g7" x="243" y="585"/></g><g fill="#000"><use href="#g0" x="268" y="585"/><use href="#g3" x="274" y="585"/><use href="#gsl" x="280" y="585"/><use href="#g1" x="286" y="585"/><use href="#g7" x="292" y="585"/></g><g fill="#000"><use href="#g0" x="357" y="585"/><use href="#g4" x="363" y="585"/></g><g fill="#000"><use href="#g0" x="382" y="585"/><use href="#g4" x="388" y="585"/><use href="#gsl" x="394" y="585"/><use href="#g0" x="400" y="585"/><use href="#g4" x="406" y="585"/></g><g fill="#000"><use href="#g0" x="430" y="585"/><use href="#g4" x="436" y="585"/><use href="#gsl" x="442" y="585"/><use href="#g1" x="448" y="585"/><use href="#g4" x="454" y="585"/></g><g fill="#000"><use href="#g0" x="490" y="585"/><use href="#g4" x="496" y="585"/><use href="#gsl" x="502" y="585"/><use href="#g2" x="508" y="585"/><use href="#g3" x="514" y="585"/></g><g fill="#fff"><use href="#h0" x="567" y="300"/><use href="#h1" x="579" y="300"/><use href="#g5" x="591" y="300"/><use href="#h19" x="597" y="300"/></g><g fill="#fff"><use href="#g1" x="655" y="301"/><use href="#g1" x="661" y="301"/><use href="#h14" x="667" y="301"/><use href="#g3" x="679" y="301"/><use href="#g0" x="685" y="301"/><use href="#h15" x="691" y="301"/></g><g fill="#fff"><use href="#g1" x="740" y="301"/><use href="#g6" x="746" y="301"/><use href="#h14" x="752" y="301"/><use href="#g0" x="764" y="301"/><use href="#g0" x="770" y="301"/><use href="#h15" x="776" y="301"/></g><g fill="#fff"><use href="#h7" x="836" y="301"/><use href="#h16" x="848" y="301"/></g><g fill="#fff"><use href="#h7" x="908" y="301"/><use href="#h16" x="920" y="301"/><use href="#h17" x="932" y="301"/><use href="#h18" x="944" y="301"/></g><g fill="#000"><use href="#g2" x="569" y="325"/><use href="#g5" x="575" y="325"/><use href="#gsl" x="581" y="325"/><use href="#g0" x="587" y="325"/><use href="#g4" x="593" y="325"/><use href="#gsl" x="599" y="325"/><use href="#g2" x="605" y="325"/><use href="#g2" x="611" y="325"/></g><g fill="#000"><use href="#g2" x="685" y="325"/><use href="#gcm" x="691" y="325"/><use href="#g4" x="695" y="325"/><use href="#g4" x="701" y="325"/><use href="#g0" x="707" y="325"/></g><g fill="#000"><use href="#g2" x="770" y="325"/><use href="#gcm" x="776" y="325"/><use href="#g4" x="780" y="325"/><use href="#g4" x="786" y="325"/><use href="#g1" x="792" y="325"/></g><g fill="#000"><use href="#g2" x="854" y="325"/><use href="#gcm" x="860" y="325"/><use href="#g4" x="864" y="325"/><use href="#g4" x="870" y="325"/><use href="#g1" x="876" y="325"/></g><g fill="#000"><use href="#gmn" x="964" y="325"/></g><g fill="#000"><use href="#g2" x="569" y="350"/><use href="#g5" x="575" y="350"/><use href="#gsl" x="581" y="350"/><use href="#g0" x="587" y="350"/><use href="#g4" x="593" y="350"/><use href="#gsl" x="599" y="350"/><use href="#g2" x="605" y="350"/><use href="#g1" x="611" y="350"/></g><g fill="#000"><use href="#g2" x="685" y="350"/><use href="#gcm" x="691" y="350"/><use href="#g4" x="695" y="350"/><use href="#g4" x="701" y="350"/><use href="#g8" x="707" y="350"/></g><g fill="#000"><use href="#g2" x="770" y="350"/><use href="#gcm" x="776" y="350"/><use href="#g4" x="780" y="350"/><use href="#g4" x="786" y="350"/><use href="#g1" x="792" y="350"/></g><g fill="#000"><use href="#g2" x="854" y="350"/><use href="#gcm" x="860" y="350"/><use href="#g4" x="864" y="350"/><use href="#g6" x="870" y="350"/><use href="#g4" x="876" y="350"/></g><g fill="#0000cc"><use href="#gmn" x="936" y="350"/><use href="#g0" x="942" y="350"/><use href="#gcm" x="948" y="350"/><use href="#g0" x="952" y="350"/><use href="#g2" x="958" y="350"/><use href="#g3" x="964" y="350"/></g><g fill="#000"><use href="#g2" x="569" y="375"/><use href="#g5" x="575" y="375"/><use href="#gsl" x="581" y="375"/><use href="#g0" x="587" y="375"/><use href="#g4" x="593" y="375"/><use href="#gsl" x="599" y="375"/><use href="#g1" x="605" y="375"/><use href="#g8" x="611" y="375"/></g><g fill="#000"><use href="#g2" x="685" y="375"/><use href="#gcm" x="691" y="375"/><use href="#g4" x="695" y="375"/><use href="#g5" x="701" y="375"/><use href="#g8" x="707" y="375"/></g><g fill="#000"><use href="#g2" x="770" y="375"/><use href="#gcm" x="776" y="375"/><use href="#g4" x="780" y="375"/><use href="#g6" x="786" y="375"/><use href="#g4" x="792" y="375"/></g><g fill="#000"><use href="#g2" x="854" y="375"/><use href="#gcm" x="860" y="375"/><use href="#g4" x="864" y="375"/><use href="#g8" x="870" y="375"/><use href="#g3" x="876" y="375"/></g><g fill="#0000cc"><use href="#gmn" x="936" y="375"/><use href="#g0" x="942" y="375"/><use href="#gcm" x="948" y="375"/><use href="#g0" x="952" y="375"/><use href="#g1" x="958" y="375"/><use href="#g9" x="964" y="375"/></g><g fill="#000"><use href="#g2" x="569" y="401"/><use href="#g5" x="575" y="401"/><use href="#gsl" x="581" y="401"/><use href="#g0" x="587" y="401"/><use href="#g4" x="593" y="401"/><use href="#gsl" x="599" y="401"/><use href="#g1" x="605" y="401"/><use href="#g7" x="611" y="401"/></g><g fill="#000"><use href="#g2" x="685" y="401"/><use href="#gcm" x="691" y="401"/><use href="#g4" x="695" y="401"/><use href="#g6" x="701" y="401"/><use href="#g2" x="707" y="401"/></g><g fill="#000"><use href="#g2" x="770" y="401"/><use href="#gcm" x="776" y="401"/><use href="#g4" x="780" y="401"/><use href="#g8" x="786" y="401"/><use href="#g3" x="792" y="401"/></g><g fill="#000"><use href="#g2" x="854" y="401"/><use href="#gcm" x="860" y="401"/><use href="#g4" x="864" y="401"/><use href="#g6" x="870" y="401"/><use href="#g3" x="876" y="401"/></g><g fill="#dd0000"><use href="#g0" x="942" y="401"/><use href="#gcm" x="948" y="401"/><use href="#g0" x="952" y="401"/><use href="#g2" x="958" y="401"/><use href="#g0" x="964" y="401"/></g><g fill="#000"><use href="#g2" x="569" y="426"/><use href="#g5" x="575" y="426"/><use href="#gsl" x="581" y="426"/><use href="#g0" x="587" y="426"/><use href="#g4" x="593" y="426"/><use href="#gsl" x="599" y="426"/><use href="#g1" x="605" y="426"/><use href="#g6" x="611" y="426"/></g><g fill="#000"><use href="#g2" x="685" y="426"/><use href="#gcm" x="691" y="426"/><use href="#g4" x="695" y="426"/><use href="#g8" x="701" y="426"/><use href="#g1" x="707" y="426"/></g><g fill="#000"><use href="#g2" x="770" y="426"/><use href="#gcm" x="776" y="426"/><use href="#g4" x="780" y="426"/><use href="#g6" x="786" y="426"/><use href="#g3" x="792" y="426"/></g><g fill="#000"><use href="#g2" x="854" y="426"/><use href="#gcm" x="860" y="426"/><use href="#g4" x="864" y="426"/><use href="#g9" x="870" y="426"/><use href="#g9" x="876" y="426"/></g><g fill="#0000cc"><use href="#gmn" x="936" y="426"/><use href="#g0" x="942" y="426"/><use href="#gcm" x="948" y="426"/><use href="#g0" x="952" y="426"/><use href="#g3" x="958" y="426"/><use href="#g6" x="964" y="426"/></g><g fill="#000"><use href="#g2" x="569" y="451"/><use href="#g5" x="575" y="451"/><use href="#gsl" x="581" y="451"/><use href="#g0" x="587" y="451"/><use href="#g4" x="593" y="451"/><use href="#gsl" x="599" y="451"/><use href="#g1" x="605" y="451"/><use href="#g5" x="611" y="451"/></g><g fill="#000"><use href="#g2" x="685" y="451"/><use href="#gcm" x="691" y="451"/><use href="#g5" x="695" y="451"/><use href="#g0" x="701" y="451"/><use href="#g0" x="707" y="451"/></g><g fill="#000"><use href="#g2" x="770" y="451"/><use href="#gcm" x="776" y="451"/><use href="#g4" x="780" y="451"/><use href="#g9" x="786" y="451"/><use href="#g9" x="792" y="451"/></g><g fill="#000"><use href="#g2" x="854" y="451"/><use href="#gcm" x="860" y="451"/><use href="#g5" x="864" y="451"/><use href="#g0" x="870" y="451"/><use href="#g9" x="876" y="451"/></g><g fill="#0000cc"><use href="#gmn" x="936" y="451"/><use href="#g0" x="942" y="451"/><use href="#gcm" x="948" y="451"/><use href="#g0" x="952" y="451"/><use href="#g1" x="958" y="451"/><use href="#g0" x="964" y="451"/></g><g fill="#000"><use href="#g2" x="569" y="477"/><use href="#g5" x="575" y="477"/><use href="#gsl" x="581" y="477"/><use href="#g0" x="587" y="477"/><use href="#g4" x="593" y="477"/><use href="#gsl" x="599" y="477"/><use href="#g1" x="605" y="477"/><use href="#g4" x="611" y="477"/></g><g fill="#000"><use href="#g2" x="685" y="477"/><use href="#gcm" x="691" y="477"/><use href="#g5" x="695" y="477"/><use href="#g2" x="701" y="477"/><use href="#g2" x="707" y="477"/></g><g fill="#000"><use href="#g2" x="770" y="477"/><use href="#gcm" x="776" y="477"/><use href="#g5" x="780" y="477"/><use href="#g0" x="786" y="477"/><use href="#g9" x="792" y="477"/></g><g fill="#000"><use href="#g2" x="854" y="477"/><use href="#gcm" x="860" y="477"/><use href="#g5" x="864" y="477"/><use href="#g1" x="870" y="477"/><use href="#g0" x="876" y="477"/></g><g fill="#0000cc"><use href="#gmn" x="936" y="477"/><use href="#g0" x="942" y="477"/><use href="#gcm" x="948" y="477"/><use href="#g0" x="952" y="477"/><use href="#g0" x="958" y="477"/><use href="#g1" x="964" y="477"/></g><g fill="#000"><use href="#g2" x="569" y="502"/><use href="#g5" x="575" y="502"/><use href="#gsl" x="581" y="502"/><use href="#g0" x="587" y="502"/><use href="#g4" x="593" y="502"/><use href="#gsl" x="599" y="502"/><use href="#g1" x="605" y="502"/><use href="#g1" x="611" y="502"/></g><g fill="#000"><use href="#g2" x="685" y="502"/><use href="#gcm" x="691" y="502"/><use href="#g5" x="695" y="502"/><use href="#g1" x="701" y="502"/><use href="#g0" x="707" y="502"/></g><g fill="#000"><use href="#g2" x="770" y="502"/><use href="#gcm" x="776" y="502"/><use href="#g5" x="780" y="502"/><use href="#g1" x="786" y="502"/><use href="#g0" x="792" y="502"/></g><g fill="#000"><use href="#g2" x="854" y="502"/><use href="#gcm" x="860" y="502"/><use href="#g5" x="864" y="502"/><use href="#g1" x="870" y="502"/><use href="#g4" x="876" y="502"/></g><g fill="#0000cc"><use href="#gmn" x="936" y="502"/><use href="#g0" x="942" y="502"/><use href="#gcm" x="948" y="502"/><use href="#g0" x="952" y="502"/><use href="#g0" x="958" y="502"/><use href="#g4" x="964" y="502"/></g><g fill="#000"><use href="#g2" x="569" y="527"/><use href="#g5" x="575" y="527"/><use href="#gsl" x="581" y="527"/><use href="#g0" x="587" y="527"/><use href="#g4" x="593" y="527"/><use href="#gsl" x="599" y="527"/><use href="#g1" x="605" y="527"/><use href="#g0" x="611" y="527"/></g><g fill="#000"><use href="#g2" x="685" y="527"/><use href="#gcm" x="691" y="527"/><use href="#g5" x="695" y="527"/><use href="#g2" x="701" y="527"/><use href="#g8" x="707" y="527"/></g><g fill="#000"><use href="#g2" x="770" y="527"/><use href="#gcm" x="776" y="527"/><use href="#g5" x="780" y="527"/><use href="#g1" x="786" y="527"/><use href="#g4" x="792" y="527"/></g><g fill="#000"><use href="#g2" x="854" y="527"/><use href="#gcm" x="860" y="527"/><use href="#g5" x="864" y="527"/><use href="#g4" x="870" y="527"/><use href="#g0" x="876" y="527"/></g><g fill="#0000cc"><use href="#gmn" x="936" y="527"/><use href="#g0" x="942" y="527"/><use href="#gcm" x="948" y="527"/><use href="#g0" x="952" y="527"/><use href="#g2" x="958" y="527"/><use href="#g6" x="964" y="527"/></g><g fill="#000"><use href="#g2" x="569" y="553"/><use href="#g5" x="575" y="553"/><use href="#gsl" x="581" y="553"/><use href="#g0" x="587" y="553"/><use href="#g4" x="593" y="553"/><use href="#gsl" x="599" y="553"/><use href="#g0" x="605" y="553"/><use href="#g9" x="611" y="553"/></g><g fill="#000"><use href="#g2" x="685" y="553"/><use href="#gcm" x="691" y="553"/><use href="#g5" x="695" y="553"/><use href="#g1" x="701" y="553"/><use href="#g8" x="707" y="553"/></g><g fill="#000"><use href="#g2" x="770" y="553"/><use href="#gcm" x="776" y="553"/><use href="#g5" x="780" y="553"/><use href="#g4" x="786" y="553"/><use href="#g0" x="792" y="553"/></g><g fill="#000"><use href="#g2" x="854" y="553"/><use href="#gcm" x="860" y="553"/><use href="#g5" x="864" y="553"/><use href="#g0" x="870" y="553"/><use href="#g8" x="876" y="553"/></g><g fill="#dd0000"><use href="#g0" x="942" y="553"/><use href="#gcm" x="948" y="553"/><use href="#g0" x="952" y="553"/><use href="#g3" x="958" y="553"/><use href="#g2" x="964" y="553"/></g><g fill="#000"><use href="#g2" x="569" y="578"/><use href="#g5" x="575" y="578"/><use href="#gsl" x="581" y="578"/><use href="#g0" x="587" y="578"/><use href="#g4" x="593" y="578"/><use href="#gsl" x="599" y="578"/><use href="#g0" x="605" y="578"/><use href="#g8" x="611" y="578"/></g><g fill="#000"><use href="#g2" x="685" y="578"/><use href="#gcm" x="691" y="578"/><use href="#g5" x="695" y="578"/><use href="#g3" x="701" y="578"/><use href="#g1" x="707" y="578"/></g><g fill="#000"><use href="#g2" x="770" y="578"/><use href="#gcm" x="776" y="578"/><use href="#g5" x="780" y="578"/><use href="#g0" x="786" y="578"/><use href="#g8" x="792" y="578"/></g><g fill="#000"><use href="#g2" x="854" y="578"/><use href="#gcm" x="860" y="578"/><use href="#g4" x="864" y="578"/><use href="#g9" x="870" y="578"/><use href="#g1" x="876" y="578"/></g><g fill="#dd0000"><use href="#g0" x="942" y="578"/><use href="#gcm" x="948" y="578"/><use href="#g0" x="952" y="578"/><use href="#g1" x="958" y="578"/><use href="#g7" x="964" y="578"/></g></svg>
</body></html>
